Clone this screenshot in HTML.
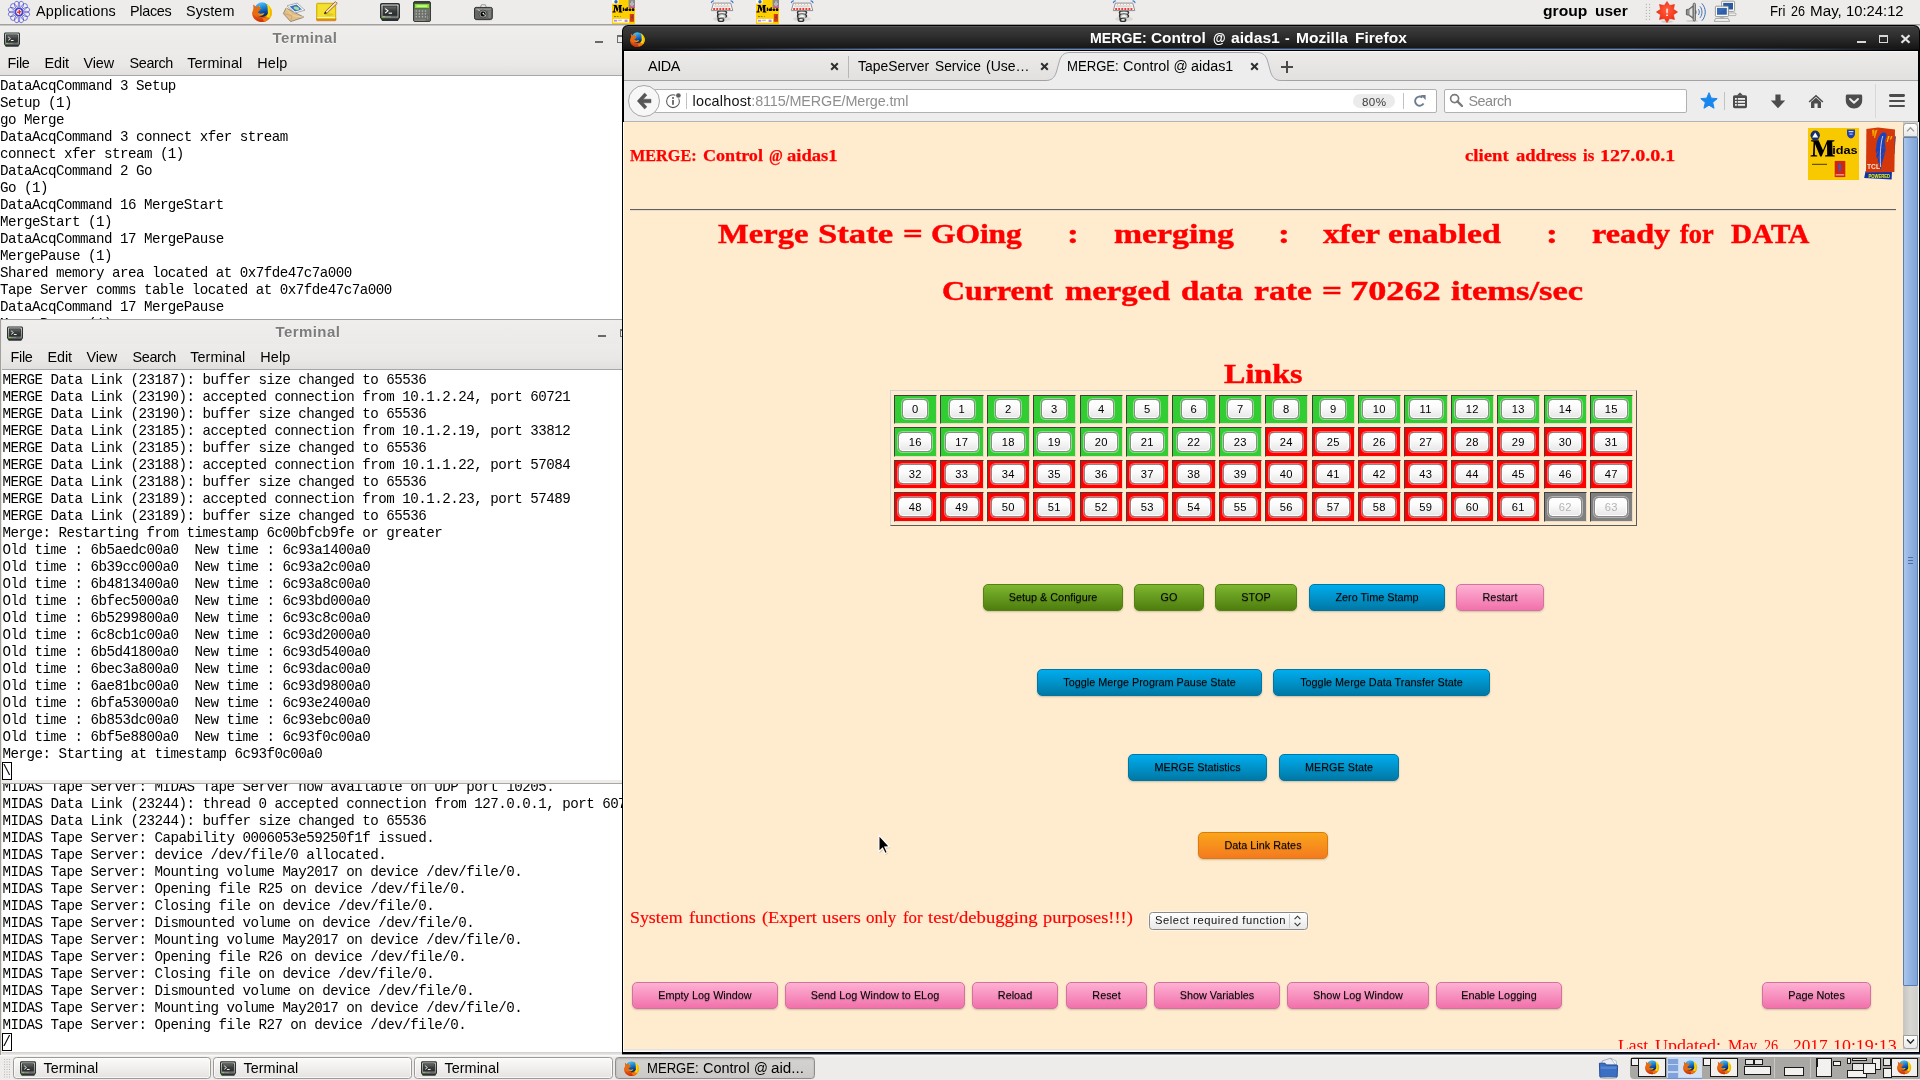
<!DOCTYPE html>
<html><head><meta charset="utf-8"><title>MERGE: Control @ aidas1</title>
<style>
html,body{margin:0;padding:0;background:#edeceb;}
body{width:1920px;height:1080px;overflow:hidden;font-family:"Liberation Sans",sans-serif;}
#desk{will-change:transform;position:relative;width:1920px;height:1080px;overflow:hidden;background:#edeceb;}
.abs{position:absolute;}
svg{position:absolute;overflow:visible;}
pre{margin:0;}
.term{position:absolute;background:#fff;overflow:hidden;}
.term pre{position:absolute;font-family:"Liberation Mono",monospace;font-size:13.33px;line-height:17px;color:#000;letter-spacing:0px;}

</style></head>
<body>
<div id="desk">
<!-- top panel -->
<div style="position:absolute;left:0px;top:0px;width:1920px;height:24px;background:#edeceb;"></div>
<div style="position:absolute;left:0px;top:24px;width:1920px;height:1px;background:#a3a19e;"></div>
<div style="position:absolute;left:0px;top:25px;width:1920px;height:1px;background:#c9c7c4;"></div>
<svg style="left:7.100000000000001px;top:0px" width="24" height="24" viewBox="-12 -12 24 24"><circle cx="0" cy="0" r="10.23" fill="#f4f4ea" opacity="0.75"/><ellipse cx="7.04" cy="0" rx="3.96" ry="2.58" fill="none" stroke="#4a4ad6" stroke-width="0.7" transform="rotate(15)"/><ellipse cx="7.04" cy="0" rx="3.96" ry="2.58" fill="none" stroke="#4a4ad6" stroke-width="0.7" transform="rotate(45)"/><ellipse cx="7.04" cy="0" rx="3.96" ry="2.58" fill="none" stroke="#4a4ad6" stroke-width="0.7" transform="rotate(75)"/><ellipse cx="7.04" cy="0" rx="3.96" ry="2.58" fill="none" stroke="#4a4ad6" stroke-width="0.7" transform="rotate(105)"/><ellipse cx="7.04" cy="0" rx="3.96" ry="2.58" fill="none" stroke="#4a4ad6" stroke-width="0.7" transform="rotate(135)"/><ellipse cx="7.04" cy="0" rx="3.96" ry="2.58" fill="none" stroke="#4a4ad6" stroke-width="0.7" transform="rotate(165)"/><ellipse cx="7.04" cy="0" rx="3.96" ry="2.58" fill="none" stroke="#4a4ad6" stroke-width="0.7" transform="rotate(195)"/><ellipse cx="7.04" cy="0" rx="3.96" ry="2.58" fill="none" stroke="#4a4ad6" stroke-width="0.7" transform="rotate(225)"/><ellipse cx="7.04" cy="0" rx="3.96" ry="2.58" fill="none" stroke="#4a4ad6" stroke-width="0.7" transform="rotate(255)"/><ellipse cx="7.04" cy="0" rx="3.96" ry="2.58" fill="none" stroke="#4a4ad6" stroke-width="0.7" transform="rotate(285)"/><ellipse cx="7.04" cy="0" rx="3.96" ry="2.58" fill="none" stroke="#4a4ad6" stroke-width="0.7" transform="rotate(315)"/><ellipse cx="7.04" cy="0" rx="3.96" ry="2.58" fill="none" stroke="#4a4ad6" stroke-width="0.7" transform="rotate(345)"/><circle cx="0" cy="0" r="3.41" fill="#f0f0f0" stroke="#3535cc" stroke-width="1.05"/><path d="M-2 0.4 L2.4 -0.4 M0.2 -2.2 L0.6 2.4" stroke="#e02828" stroke-width="1.3" fill="none"/></svg>
<span style="position:absolute;left:36.00px;top:1.81px;font-family:'Liberation Sans', sans-serif;font-size:14.4px;line-height:18px;color:#000;white-space:pre;letter-spacing:0.199px;">Applications</span>
<span style="position:absolute;left:130.00px;top:1.81px;font-family:'Liberation Sans', sans-serif;font-size:14.4px;line-height:18px;color:#000;white-space:pre;letter-spacing:-0.284px;">Places</span>
<span style="position:absolute;left:186.00px;top:1.81px;font-family:'Liberation Sans', sans-serif;font-size:14.4px;line-height:18px;color:#000;white-space:pre;letter-spacing:0.086px;">System</span>
<svg style="left:252px;top:2px" width="20" height="20" viewBox="0 0 20 20"><defs><linearGradient id="fg1" x1="0.3" y1="0" x2="0.6" y2="1"><stop offset="0" stop-color="#5cc6f8"/><stop offset="0.35" stop-color="#1f8fdc"/><stop offset="0.7" stop-color="#0b4aa2"/><stop offset="1" stop-color="#071f5e"/></linearGradient><linearGradient id="fb1" x1="0" y1="0" x2="1" y2="0"><stop offset="0" stop-color="#e55f10"/><stop offset="0.6" stop-color="#ee7a10"/><stop offset="0.8" stop-color="#ffd200"/><stop offset="0.93" stop-color="#ffe000"/><stop offset="1" stop-color="#e8a000"/></linearGradient><linearGradient id="fd1" x1="0" y1="0" x2="0" y2="1"><stop offset="0" stop-color="#d02808" stop-opacity="0"/><stop offset="0.55" stop-color="#d02808" stop-opacity="0"/><stop offset="1" stop-color="#c82408" stop-opacity="0.95"/></linearGradient><linearGradient id="fa1" x1="0" y1="0" x2="1" y2="0"><stop offset="0" stop-color="#e86410"/><stop offset="1" stop-color="#ffc400"/></linearGradient></defs><path d="M1.2 2.4 C1.2 4.4 1.8 5.4 2 6.4 C0.6 8.6 0 10.4 0.2 12 C0.8 16.8 5 20 10 20 C15.4 20 19.8 16 20 10.6 C20.1 7.6 18.6 4.8 16.4 3 C14.6 1.6 12.4 1.4 10.4 1.4 C7.4 1.4 5 2.6 3.6 4.4 C2.6 3.4 1.8 2.8 1.2 2.4 Z" fill="url(#fb1)"/><path d="M1.2 2.4 C1.2 4.4 1.8 5.4 2 6.4 C0.6 8.6 0 10.4 0.2 12 C0.8 16.8 5 20 10 20 C15.4 20 19.8 16 20 10.6 C20.1 7.6 18.6 4.8 16.4 3 C14.6 1.6 12.4 1.4 10.4 1.4 C7.4 1.4 5 2.6 3.6 4.4 C2.6 3.4 1.8 2.8 1.2 2.4 Z" fill="url(#fd1)"/><circle cx="10" cy="7.6" r="7.3" fill="url(#fg1)"/><path d="M14.6 1.9 C17.6 3.6 19.9 7 19.8 10.6 C19.7 12.6 19 14.6 17.8 16 L14.2 15.2 C15.6 13.6 16.2 11.6 15.8 9.6 C15.6 7.4 16 5 14.6 1.9 Z" fill="#ffdc00"/><path d="M17.2 4.4 C18.8 6 19.8 8.4 19.8 10.6 C19.7 12.6 19 14.6 17.8 16 L16.8 15.8 C18.2 13.4 18.6 8.6 17.2 4.4 Z" fill="#f0a800" opacity="0.75"/><path d="M14.2 15.2 L17.8 16 C16.4 17.8 14.4 19.2 12 19.7 L10.4 15.9 C12 16.2 13.2 16 14.2 15.2 Z" fill="#ee7a10"/><path d="M1.8 4 C3 5 4.6 5.2 5.8 4.8 C6.6 4.4 7.2 3.6 8 3.4 C7.6 4.2 7.6 4.8 7.8 5.4 L9.6 6.7 L7.8 7.6 C7.8 8.6 7.2 9.2 6.4 9.6 C5.6 9.8 5.6 10.4 6.6 11.6 L5 15 L0.6 12 Z" fill="#ea6a10"/><path d="M6.6 4.4 C7 3.9 7.4 3.6 8 3.4 C7.6 4.2 7.6 4.8 7.8 5.4 Z" fill="#ffb400"/><path d="M5.4 9.8 C6.4 11.4 8 11.9 9.6 11.6 C10.6 11.4 11.4 11 12.4 11.2 C12 12.2 11 13 9.6 13.6 C7.8 14.2 6 13.9 4.8 13 Z" fill="url(#fa1)"/></svg>
<svg style="left:283px;top:2px" width="23" height="21" viewBox="0 0 23 21"><path d="M0.4 11.6 L3 6 L21 15.2 L7.6 19.6 Z" fill="#e2bd84" stroke="#77736c" stroke-width="0.75" stroke-linejoin="round"/><path d="M3 6 L9 13.6 L21 15.2" fill="none" stroke="#f0d8ac" stroke-width="0.8"/><path d="M0.4 11.6 L9 13.6 L7.6 19.6" fill="none" stroke="#c79f64" stroke-width="0.7"/><path d="M4 3.8 L14 1 L22 8.2 L11.8 11 Z" fill="#fbfbfa" stroke="#8c8c8a" stroke-width="0.7" stroke-linejoin="round"/><path d="M6.6 4.5 L13.6 2.6 L19 7.4 L12 9.4 Z" fill="#3a72c2"/><ellipse cx="13.4" cy="6.2" rx="2.9" ry="1.6" fill="#a8dca0" transform="rotate(15 13.4 6.2)"/><circle cx="17.6" cy="7.4" r="0.8" fill="#5ab0f0"/></svg>
<svg style="left:316px;top:1px" width="22" height="21" viewBox="0 0 22 21"><rect x="0.5" y="16.6" width="19.5" height="3.2" rx="1" fill="#e8800e" stroke="#c86a08" stroke-width="0.5"/><rect x="0.7" y="2.3" width="19" height="15.6" rx="0.8" fill="#f1d910" stroke="#c9a400" stroke-width="0.9"/><rect x="1.8" y="3.4" width="16.8" height="12.4" fill="#f6e54a" opacity="0.55"/><rect x="1.2" y="16.2" width="18" height="0.9" fill="#fffbe0"/><path d="M8.4 12.6 L9.6 10.2 L19.4 0.6 L21.2 2.4 L11.2 12 Z" fill="#f2e0bc" stroke="#8a4c0c" stroke-width="0.8" stroke-linejoin="round"/><path d="M8.2 12.9 L9.2 10.6 L10.8 12.2 Z" fill="#1a1208"/><ellipse cx="13" cy="13.6" rx="4.6" ry="1.3" fill="#b8a000" opacity="0.35"/></svg>
<svg style="left:380px;top:3px" width="20" height="18" viewBox="0 0 20 18"><defs><linearGradient id="tb1" x1="0" y1="0" x2="0" y2="1"><stop offset="0" stop-color="#d8dbd4"/><stop offset="1" stop-color="#7f827c"/></linearGradient><linearGradient id="ts1" x1="0" y1="0" x2="0" y2="1"><stop offset="0" stop-color="#6a6d69"/><stop offset="0.5" stop-color="#3a3d3c"/><stop offset="1" stop-color="#2c2f30"/></linearGradient></defs><path d="M2 0 L18 0 C19.2 0 20 0.8 20 2 L20 14.6 L17.8 18 L2.2 18 L0 14.6 L0 2 C0 0.8 0.8 0 2 0 Z" fill="#2b3032"/><rect x="1.4" y="1.4" width="17.2" height="13.8" rx="0.8" fill="url(#tb1)"/><rect x="3.1" y="3.1" width="13.8" height="9.2" fill="url(#ts1)" stroke="#25292a" stroke-width="0.9"/><path d="M5.2 5.6 L8 7.8 L5.2 10" fill="none" stroke="#fff" stroke-width="1.05"/><rect x="8.6" y="9.6" width="3.4" height="1.15" fill="#fff"/><rect x="2.4" y="13.2" width="2.6" height="1.1" fill="#73e020"/><rect x="11" y="13.3" width="6" height="0.9" fill="#5c5f5a"/></svg>
<svg style="left:413px;top:1px" width="18" height="21" viewBox="0 0 18 21"><rect x="0.5" y="0.5" width="17" height="20" rx="1.5" fill="#70726e" stroke="#3a3c3a" stroke-width="1"/><rect x="1" y="1" width="16" height="1.6" fill="#3c3e3c"/><rect x="1.6" y="2.8" width="14.8" height="4.6" fill="#86e032" stroke="#3a4a2a" stroke-width="0.5"/><rect x="3.6" y="4.2" width="10.6" height="1.8" fill="#c8f4a0"/><rect x="2.6" y="9.4" width="1.3" height="1.2" fill="#c2c4be"/><rect x="5.7" y="9.4" width="1.3" height="1.2" fill="#c2c4be"/><rect x="8.8" y="9.4" width="1.3" height="1.2" fill="#c2c4be"/><rect x="11.9" y="9.4" width="1.3" height="1.2" fill="#c2c4be"/><rect x="2.6" y="12.3" width="1.3" height="1.2" fill="#c2c4be"/><rect x="5.7" y="12.3" width="1.3" height="1.2" fill="#c2c4be"/><rect x="8.8" y="12.3" width="1.3" height="1.2" fill="#c2c4be"/><rect x="11.9" y="12.3" width="1.3" height="1.2" fill="#c2c4be"/><rect x="2.6" y="15.2" width="1.3" height="1.2" fill="#c2c4be"/><rect x="5.7" y="15.2" width="1.3" height="1.2" fill="#c2c4be"/><rect x="8.8" y="15.2" width="1.3" height="1.2" fill="#c2c4be"/><rect x="11.9" y="15.2" width="1.3" height="1.2" fill="#c2c4be"/><rect x="13.2" y="14" width="2.6" height="5" fill="#8a8c86" stroke="#4a4c48" stroke-width="0.4"/><rect x="1.6" y="18.6" width="11" height="1.2" fill="#8c8e88"/></svg>
<svg style="left:474px;top:3.6px" width="19" height="17" viewBox="0 0 19 17"><ellipse cx="9.5" cy="16.2" rx="8.6" ry="0.8" fill="#cfcdca"/><path d="M6.4 3.6 L7.4 0.8 L11.4 0.8 L12.4 3.6 Z" fill="#f4f4f2" stroke="#5a5c58" stroke-width="0.6"/><rect x="0.5" y="3.4" width="17.8" height="12" rx="1.6" fill="#666864" stroke="#2f312f" stroke-width="1"/><rect x="1.6" y="4.4" width="15.6" height="1.8" fill="#8c8e8a"/><rect x="14.4" y="6.6" width="2.4" height="7.4" fill="#7e807c"/><circle cx="9" cy="10" r="4" fill="#9a9c98" stroke="#3a3c3a" stroke-width="0.7"/><circle cx="9" cy="10" r="2.5" fill="#0a0a0a"/><path d="M9 9.4 L11.8 12.2" stroke="#e8e8e6" stroke-width="0.9"/><circle cx="9.4" cy="9.6" r="0.8" fill="#f2f2f0"/><path d="M4 5.4 L5.6 7" stroke="#e8e8e6" stroke-width="1"/></svg>
<svg style="left:612px;top:0px" width="23" height="24" viewBox="0 0 23 24"><rect x="0" y="0" width="23" height="24" fill="#ffcf00"/><rect x="0" y="0" width="6.6" height="3.6" fill="#fdfdf8"/><circle cx="4" cy="1.8" r="1.7" fill="#2d66b8"/><rect x="16.6" y="0" width="6.4" height="6.6" fill="#8b8b8b"/><circle cx="20" cy="4" r="1.3" fill="none" stroke="#e4e4e4" stroke-width="0.8"/><rect x="19.6" y="0.8" width="0.9" height="1" fill="#e4e4e4"/><rect x="16.6" y="6.6" width="6.4" height="1.2" fill="#c630c6"/><path d="M0.4 12.4 L0.4 11.6 L1.6 11.2 L2.4 6.2 L1.4 5.6 L1.4 5 L4.4 5 L6.4 9.4 L6.6 5 L10 5 L10 5.8 L9.2 6.2 L9.4 11.4 L10.4 11.8 L10.4 12.4 L6.6 12.4 L6.6 11.8 L7.2 11.4 L7 7.4 L5.6 11.6 L4.8 11.6 L3.2 7 L2.8 11.2 L3.6 11.6 L3.6 12.4 Z" fill="#000"/><rect x="10.8" y="7.6" width="1.3" height="3.4" fill="#000"/><rect x="12.6" y="8.4" width="2.8" height="2.6" rx="0.8" fill="#080800"/><rect x="14.6" y="7.2" width="1.2" height="3.8" fill="#000"/><rect x="16.6" y="8.4" width="2.6" height="2.6" rx="0.8" fill="#080800"/><rect x="19.8" y="8.2" width="2.6" height="2.8" rx="0.8" fill="#080800"/><rect x="2" y="16" width="2.2" height="1" fill="#8a7a10"/><rect x="5" y="16" width="1.6" height="1" fill="#6a9a10"/><rect x="8" y="16" width="0.8" height="1" fill="#8a8a10"/><rect x="1.2" y="18.9" width="15.8" height="3.7" fill="#fff"/><rect x="2" y="19.8" width="3.2" height="1.8" fill="#9a6ae6" opacity="0.8"/><rect x="6.2" y="19.6" width="3.6" height="1.6" fill="#b9a2ee" opacity="0.8"/><rect x="12.6" y="19.6" width="3" height="2.4" fill="#9a6ae6" opacity="0.8"/><rect x="17.8" y="14" width="4.2" height="7.8" fill="#dc3c08"/><path d="M20.4 15 L19.2 18 L20 18 L19.4 20.4 L21 17.2 L20.2 17.2 L21 15 Z" fill="#2040b0"/></svg>
<svg style="left:756px;top:0px" width="23" height="24" viewBox="0 0 23 24"><rect x="0" y="0" width="23" height="24" fill="#ffcf00"/><rect x="0" y="0" width="6.6" height="3.6" fill="#fdfdf8"/><circle cx="4" cy="1.8" r="1.7" fill="#2d66b8"/><rect x="16.6" y="0" width="6.4" height="6.6" fill="#8b8b8b"/><circle cx="20" cy="4" r="1.3" fill="none" stroke="#e4e4e4" stroke-width="0.8"/><rect x="19.6" y="0.8" width="0.9" height="1" fill="#e4e4e4"/><rect x="16.6" y="6.6" width="6.4" height="1.2" fill="#c630c6"/><path d="M0.4 12.4 L0.4 11.6 L1.6 11.2 L2.4 6.2 L1.4 5.6 L1.4 5 L4.4 5 L6.4 9.4 L6.6 5 L10 5 L10 5.8 L9.2 6.2 L9.4 11.4 L10.4 11.8 L10.4 12.4 L6.6 12.4 L6.6 11.8 L7.2 11.4 L7 7.4 L5.6 11.6 L4.8 11.6 L3.2 7 L2.8 11.2 L3.6 11.6 L3.6 12.4 Z" fill="#000"/><rect x="10.8" y="7.6" width="1.3" height="3.4" fill="#000"/><rect x="12.6" y="8.4" width="2.8" height="2.6" rx="0.8" fill="#080800"/><rect x="14.6" y="7.2" width="1.2" height="3.8" fill="#000"/><rect x="16.6" y="8.4" width="2.6" height="2.6" rx="0.8" fill="#080800"/><rect x="19.8" y="8.2" width="2.6" height="2.8" rx="0.8" fill="#080800"/><rect x="2" y="16" width="2.2" height="1" fill="#8a7a10"/><rect x="5" y="16" width="1.6" height="1" fill="#6a9a10"/><rect x="8" y="16" width="0.8" height="1" fill="#8a8a10"/><rect x="1.2" y="18.9" width="15.8" height="3.7" fill="#fff"/><rect x="2" y="19.8" width="3.2" height="1.8" fill="#9a6ae6" opacity="0.8"/><rect x="6.2" y="19.6" width="3.6" height="1.6" fill="#b9a2ee" opacity="0.8"/><rect x="12.6" y="19.6" width="3" height="2.4" fill="#9a6ae6" opacity="0.8"/><rect x="17.8" y="14" width="4.2" height="7.8" fill="#dc3c08"/><path d="M20.4 15 L19.2 18 L20 18 L19.4 20.4 L21 17.2 L20.2 17.2 L21 15 Z" fill="#2040b0"/></svg>
<svg style="left:711px;top:0px" width="23" height="23" viewBox="0 0 23 23"><ellipse cx="11" cy="19" rx="9" ry="2.6" fill="#d6d4d1" opacity="0.8"/><path d="M6.8 11.6 L7.2 19.8" stroke="#2e3030" stroke-width="1.4" fill="none"/><ellipse cx="11" cy="12.5" rx="4.5" ry="1.7" fill="#ededeb" stroke="#2e3030" stroke-width="1.5"/><ellipse cx="11" cy="16" rx="4.5" ry="1.7" fill="#f6f6f4" stroke="#2e3030" stroke-width="1.5"/><ellipse cx="10" cy="19.9" rx="2.7" ry="1.5" fill="#f6f6f4" stroke="#2e3030" stroke-width="1.4"/><path d="M7.4 13.6 C9.4 14.6 12.6 14.6 14.6 13.6" stroke="#fff" stroke-width="0.8" fill="none"/><path d="M7.4 17.1 C9.4 18.1 12.6 18.1 14.6 17.1" stroke="#fff" stroke-width="0.8" fill="none"/><path d="M2.4 3.1 L19.7 3.1 L21.8 10.6 L0.3 10.6 Z" fill="#f7f7f5" stroke="#858583" stroke-width="0.9" stroke-linejoin="round"/><rect x="3.3" y="5.3" width="15.4" height="2.1" fill="#d9d9d5"/><rect x="2.20" y="8" width="1.9" height="2" fill="#ee3a3a"/><rect x="5.25" y="8" width="1.9" height="2" fill="#ee3a3a"/><rect x="8.30" y="8" width="1.9" height="2" fill="#ee3a3a"/><rect x="11.35" y="8" width="1.9" height="2" fill="#ee3a3a"/><rect x="14.40" y="8" width="1.9" height="2" fill="#ee3a3a"/><rect x="17.45" y="8" width="1.9" height="2" fill="#ee3a3a"/><rect x="4.00" y="4.1" width="0.8" height="0.8" fill="#f08a84"/><rect x="7.05" y="4.1" width="0.8" height="0.8" fill="#f08a84"/><rect x="10.10" y="4.1" width="0.8" height="0.8" fill="#f08a84"/><rect x="13.15" y="4.1" width="0.8" height="0.8" fill="#f08a84"/><rect x="16.20" y="4.1" width="0.8" height="0.8" fill="#f08a84"/><path d="M0.4 2.6 C0.6 1.6 1.4 0.9 2.4 0.8" stroke="#3f7ad0" stroke-width="1.2" fill="none" stroke-linecap="round"/><path d="M22 2.6 C21.8 1.6 21 0.9 20 0.8" stroke="#3f7ad0" stroke-width="1.2" fill="none" stroke-linecap="round"/></svg>
<svg style="left:791px;top:0px" width="23" height="23" viewBox="0 0 23 23"><ellipse cx="11" cy="19" rx="9" ry="2.6" fill="#d6d4d1" opacity="0.8"/><path d="M6.8 11.6 L7.2 19.8" stroke="#2e3030" stroke-width="1.4" fill="none"/><ellipse cx="11" cy="12.5" rx="4.5" ry="1.7" fill="#ededeb" stroke="#2e3030" stroke-width="1.5"/><ellipse cx="11" cy="16" rx="4.5" ry="1.7" fill="#f6f6f4" stroke="#2e3030" stroke-width="1.5"/><ellipse cx="10" cy="19.9" rx="2.7" ry="1.5" fill="#f6f6f4" stroke="#2e3030" stroke-width="1.4"/><path d="M7.4 13.6 C9.4 14.6 12.6 14.6 14.6 13.6" stroke="#fff" stroke-width="0.8" fill="none"/><path d="M7.4 17.1 C9.4 18.1 12.6 18.1 14.6 17.1" stroke="#fff" stroke-width="0.8" fill="none"/><path d="M2.4 3.1 L19.7 3.1 L21.8 10.6 L0.3 10.6 Z" fill="#f7f7f5" stroke="#858583" stroke-width="0.9" stroke-linejoin="round"/><rect x="3.3" y="5.3" width="15.4" height="2.1" fill="#d9d9d5"/><rect x="2.20" y="8" width="1.9" height="2" fill="#ee3a3a"/><rect x="5.25" y="8" width="1.9" height="2" fill="#ee3a3a"/><rect x="8.30" y="8" width="1.9" height="2" fill="#ee3a3a"/><rect x="11.35" y="8" width="1.9" height="2" fill="#ee3a3a"/><rect x="14.40" y="8" width="1.9" height="2" fill="#ee3a3a"/><rect x="17.45" y="8" width="1.9" height="2" fill="#ee3a3a"/><rect x="4.00" y="4.1" width="0.8" height="0.8" fill="#f08a84"/><rect x="7.05" y="4.1" width="0.8" height="0.8" fill="#f08a84"/><rect x="10.10" y="4.1" width="0.8" height="0.8" fill="#f08a84"/><rect x="13.15" y="4.1" width="0.8" height="0.8" fill="#f08a84"/><rect x="16.20" y="4.1" width="0.8" height="0.8" fill="#f08a84"/><path d="M0.4 2.6 C0.6 1.6 1.4 0.9 2.4 0.8" stroke="#3f7ad0" stroke-width="1.2" fill="none" stroke-linecap="round"/><path d="M22 2.6 C21.8 1.6 21 0.9 20 0.8" stroke="#3f7ad0" stroke-width="1.2" fill="none" stroke-linecap="round"/></svg>
<svg style="left:1113px;top:0px" width="23" height="23" viewBox="0 0 23 23"><ellipse cx="11" cy="19" rx="9" ry="2.6" fill="#d6d4d1" opacity="0.8"/><path d="M6.8 11.6 L7.2 19.8" stroke="#2e3030" stroke-width="1.4" fill="none"/><ellipse cx="11" cy="12.5" rx="4.5" ry="1.7" fill="#ededeb" stroke="#2e3030" stroke-width="1.5"/><ellipse cx="11" cy="16" rx="4.5" ry="1.7" fill="#f6f6f4" stroke="#2e3030" stroke-width="1.5"/><ellipse cx="10" cy="19.9" rx="2.7" ry="1.5" fill="#f6f6f4" stroke="#2e3030" stroke-width="1.4"/><path d="M7.4 13.6 C9.4 14.6 12.6 14.6 14.6 13.6" stroke="#fff" stroke-width="0.8" fill="none"/><path d="M7.4 17.1 C9.4 18.1 12.6 18.1 14.6 17.1" stroke="#fff" stroke-width="0.8" fill="none"/><path d="M2.4 3.1 L19.7 3.1 L21.8 10.6 L0.3 10.6 Z" fill="#f7f7f5" stroke="#858583" stroke-width="0.9" stroke-linejoin="round"/><rect x="3.3" y="5.3" width="15.4" height="2.1" fill="#d9d9d5"/><rect x="2.20" y="8" width="1.9" height="2" fill="#ee3a3a"/><rect x="5.25" y="8" width="1.9" height="2" fill="#ee3a3a"/><rect x="8.30" y="8" width="1.9" height="2" fill="#ee3a3a"/><rect x="11.35" y="8" width="1.9" height="2" fill="#ee3a3a"/><rect x="14.40" y="8" width="1.9" height="2" fill="#ee3a3a"/><rect x="17.45" y="8" width="1.9" height="2" fill="#ee3a3a"/><rect x="4.00" y="4.1" width="0.8" height="0.8" fill="#f08a84"/><rect x="7.05" y="4.1" width="0.8" height="0.8" fill="#f08a84"/><rect x="10.10" y="4.1" width="0.8" height="0.8" fill="#f08a84"/><rect x="13.15" y="4.1" width="0.8" height="0.8" fill="#f08a84"/><rect x="16.20" y="4.1" width="0.8" height="0.8" fill="#f08a84"/><path d="M0.4 2.6 C0.6 1.6 1.4 0.9 2.4 0.8" stroke="#3f7ad0" stroke-width="1.2" fill="none" stroke-linecap="round"/><path d="M22 2.6 C21.8 1.6 21 0.9 20 0.8" stroke="#3f7ad0" stroke-width="1.2" fill="none" stroke-linecap="round"/></svg>
<span style="position:absolute;left:1543.30px;top:1.54px;font-family:'Liberation Sans', sans-serif;font-size:14.6px;line-height:18px;color:#000;white-space:pre;transform:scaleX(1.0719);transform-origin:0 50%;font-weight:bold;">group</span><span style="position:absolute;left:1594.60px;top:1.54px;font-family:'Liberation Sans', sans-serif;font-size:14.6px;line-height:18px;color:#000;white-space:pre;transform:scaleX(1.0627);transform-origin:0 50%;font-weight:bold;">user</span>
<svg style="left:1645px;top:3px" width="8" height="20" viewBox="0 0 8 20"><rect x="0.8" y="0.8" width="1.1" height="1.1" fill="#b3b1ae"/><rect x="4.0" y="0.8" width="1.1" height="1.1" fill="#b3b1ae"/><rect x="0.8" y="3.8" width="1.1" height="1.1" fill="#b3b1ae"/><rect x="4.0" y="3.8" width="1.1" height="1.1" fill="#b3b1ae"/><rect x="0.8" y="6.8" width="1.1" height="1.1" fill="#b3b1ae"/><rect x="4.0" y="6.8" width="1.1" height="1.1" fill="#b3b1ae"/><rect x="0.8" y="9.8" width="1.1" height="1.1" fill="#b3b1ae"/><rect x="4.0" y="9.8" width="1.1" height="1.1" fill="#b3b1ae"/><rect x="0.8" y="12.8" width="1.1" height="1.1" fill="#b3b1ae"/><rect x="4.0" y="12.8" width="1.1" height="1.1" fill="#b3b1ae"/><rect x="0.8" y="15.8" width="1.1" height="1.1" fill="#b3b1ae"/><rect x="4.0" y="15.8" width="1.1" height="1.1" fill="#b3b1ae"/></svg>
<svg style="left:1655.5px;top:0.6px" width="22" height="23" viewBox="0 0 22 23"><defs><radialGradient id="al" cx="0.5" cy="0.4" r="0.6"><stop offset="0" stop-color="#ff6040"/><stop offset="1" stop-color="#ef2a0c"/></radialGradient></defs><ellipse cx="11" cy="20.6" rx="6" ry="1.2" fill="#cfcdca"/><polygon points="11.00,0.40 13.68,4.53 18.50,3.50 17.47,8.32 21.60,11.00 17.47,13.68 18.50,18.50 13.68,17.47 11.00,21.60 8.32,17.47 3.50,18.50 4.53,13.68 0.40,11.00 4.53,8.32 3.50,3.50 8.32,4.53" fill="url(#al)" stroke="#e01c04" stroke-width="0.5" stroke-linejoin="round"/><rect x="10.3" y="7.4" width="1.5" height="5" rx="0.7" fill="#fff" opacity="0.92"/><rect x="10.1" y="13.6" width="1.9" height="1.4" rx="0.6" fill="#fff" opacity="0.92"/></svg>
<svg style="left:1685px;top:1px" width="24" height="22" viewBox="0 0 24 22"><ellipse cx="7" cy="20" rx="6" ry="1" fill="#cfcdca"/><path d="M1.4 8.6 L3.6 8.2 L8.4 4.6 L8.4 17.6 L3.6 14.2 L1.4 13.8 Z" fill="#8d8f8b" stroke="#4c4e4a" stroke-width="0.8" stroke-linejoin="round"/><path d="M4.6 8.8 L7.6 6.4 L7.6 15.8 L4.6 13.6 Z" fill="#e4e5e2"/><rect x="8.2" y="2.2" width="2.2" height="17.8" rx="1" fill="#babcb8" stroke="#4c4e4a" stroke-width="0.8"/><path d="M10.6 9 L11.4 9.8 L11.4 12.6 L10.6 13.4 Z" fill="#4c4e4a"/><path d="M13.4 8.2 C14.6 9.8 14.6 12.4 13.4 14" fill="none" stroke="#3f6fb5" stroke-width="1"/><path d="M15 5.4 C17.6 8.4 17.6 13.8 15 16.8" fill="none" stroke="#3f6fb5" stroke-width="1"/><path d="M16.8 2.4 C21.4 7 21.4 15.2 16.8 19.8" fill="none" stroke="#3f6fb5" stroke-width="1"/></svg>
<svg style="left:1713px;top:0px" width="24" height="23" viewBox="0 0 24 23"><rect x="8.6" y="1.2" width="13" height="10.2" rx="0.9" fill="#fbfbfa" stroke="#828480" stroke-width="0.8"/><rect x="10.2" y="2.9" width="9.8" height="6.6" fill="#2c5aa0"/><rect x="15.6" y="13" width="7.4" height="2.6" rx="1" fill="#eeeeec" stroke="#8a8c88" stroke-width="0.6"/><rect x="2.4" y="6.2" width="13" height="10.4" rx="0.9" fill="#fbfbfa" stroke="#828480" stroke-width="0.8"/><rect x="4" y="7.9" width="9.8" height="6.8" fill="#2f5fa8"/><path d="M4 14.7 L4 7.9 L13.8 7.9 Z" fill="#3f72bd" opacity="0.6"/><rect x="6.6" y="16.8" width="4.6" height="1.4" fill="#b9bbb6"/><path d="M2.6 18.4 L15.2 18.4 L16.6 21.4 L1.2 21.4 Z" fill="#f3f3f1" stroke="#8a8c88" stroke-width="0.7" stroke-linejoin="round"/></svg>
<span style="position:absolute;left:1769.65px;top:1.85px;font-family:'Liberation Sans', sans-serif;font-size:14px;line-height:18px;color:#000;white-space:pre;transform:scaleX(0.9465);transform-origin:0 50%;">Fri</span><span style="position:absolute;left:1790.80px;top:1.85px;font-family:'Liberation Sans', sans-serif;font-size:14px;line-height:18px;color:#000;white-space:pre;transform:scaleX(0.8995);transform-origin:0 50%;">26</span><span style="position:absolute;left:1809.91px;top:1.85px;font-family:'Liberation Sans', sans-serif;font-size:14px;line-height:18px;color:#000;white-space:pre;transform:scaleX(1.0872);transform-origin:0 50%;">May,</span><span style="position:absolute;left:1845.94px;top:1.85px;font-family:'Liberation Sans', sans-serif;font-size:14px;line-height:18px;color:#000;white-space:pre;transform:scaleX(1.0566);transform-origin:0 50%;">10:24:12</span>
<!-- terminal windows -->
<div style="position:absolute;left:0px;top:26px;width:622px;height:24px;background:linear-gradient(#efeeed,#ebeae9);"></div><div style="position:absolute;left:0px;top:50px;width:622px;height:25px;background:linear-gradient(#edeceb 0%,#e9e8e7 60%,#e1e0df 100%);"></div><div style="position:absolute;left:0px;top:75px;width:622px;height:1px;background:#a9a7a5;"></div><svg style="left:4px;top:32px" width="16" height="15.2" viewBox="0 0 20 18"><defs><linearGradient id="tb2" x1="0" y1="0" x2="0" y2="1"><stop offset="0" stop-color="#d8dbd4"/><stop offset="1" stop-color="#7f827c"/></linearGradient><linearGradient id="ts2" x1="0" y1="0" x2="0" y2="1"><stop offset="0" stop-color="#6a6d69"/><stop offset="0.5" stop-color="#3a3d3c"/><stop offset="1" stop-color="#2c2f30"/></linearGradient></defs><path d="M2 0 L18 0 C19.2 0 20 0.8 20 2 L20 14.6 L17.8 18 L2.2 18 L0 14.6 L0 2 C0 0.8 0.8 0 2 0 Z" fill="#2b3032"/><rect x="1.4" y="1.4" width="17.2" height="13.8" rx="0.8" fill="url(#tb2)"/><rect x="3.1" y="3.1" width="13.8" height="9.2" fill="url(#ts2)" stroke="#25292a" stroke-width="0.9"/><path d="M5.2 5.6 L8 7.8 L5.2 10" fill="none" stroke="#fff" stroke-width="1.05"/><rect x="8.6" y="9.6" width="3.4" height="1.15" fill="#fff"/><rect x="2.4" y="13.2" width="2.6" height="1.1" fill="#73e020"/><rect x="11" y="13.3" width="6" height="0.9" fill="#5c5f5a"/></svg><span style="position:absolute;left:272.40px;top:27.90px;font-family:'Liberation Sans', sans-serif;font-size:15px;line-height:19px;color:#7c7c7c;white-space:pre;font-weight:bold;letter-spacing:0.449px;text-shadow:0 1px 0 #fbfbfb;">Terminal</span><div style="position:absolute;left:595px;top:41px;width:8px;height:2px;background:#686868;"></div><div style="position:absolute;left:617px;top:35px;width:9px;height:8px;box-sizing:border-box;border:1px solid #6e6e6e;border-top-width:2px;"></div><span style="position:absolute;left:7.50px;top:53.91px;font-family:'Liberation Sans', sans-serif;font-size:14.4px;line-height:18px;color:#000;white-space:pre;letter-spacing:-0.276px;">File</span><span style="position:absolute;left:44.60px;top:53.91px;font-family:'Liberation Sans', sans-serif;font-size:14.4px;line-height:18px;color:#000;white-space:pre;letter-spacing:-0.153px;">Edit</span><span style="position:absolute;left:83.40px;top:53.91px;font-family:'Liberation Sans', sans-serif;font-size:14.4px;line-height:18px;color:#000;white-space:pre;letter-spacing:-0.084px;">View</span><span style="position:absolute;left:129.60px;top:53.91px;font-family:'Liberation Sans', sans-serif;font-size:14.4px;line-height:18px;color:#000;white-space:pre;letter-spacing:-0.402px;">Search</span><span style="position:absolute;left:187.20px;top:53.91px;font-family:'Liberation Sans', sans-serif;font-size:14.4px;line-height:18px;color:#000;white-space:pre;letter-spacing:0.101px;">Terminal</span><span style="position:absolute;left:257.30px;top:53.91px;font-family:'Liberation Sans', sans-serif;font-size:14.4px;line-height:18px;color:#000;white-space:pre;letter-spacing:0.098px;">Help</span>
<div class="term" style="left:0;top:76px;width:622px;height:243px;"><pre style="left:0px;top:1.72px;font-size:14.2px;letter-spacing:-0.520px;">DataAcqCommand 3 Setup
Setup (1)
go Merge
DataAcqCommand 3 connect xfer stream
connect xfer stream (1)
DataAcqCommand 2 Go
Go (1)
DataAcqCommand 16 MergeStart
MergeStart (1)
DataAcqCommand 17 MergePause
MergePause (1)
Shared memory area located at 0x7fde47c7a000
Tape Server comms table located at 0x7fde47c7a000
DataAcqCommand 17 MergePause
MergePause (1)</pre></div>
<div style="position:absolute;left:0px;top:319px;width:622px;height:1px;background:#a3a19e;"></div>
<div style="position:absolute;left:0px;top:320px;width:622px;height:24px;background:linear-gradient(#efeeed,#ebeae9);"></div><div style="position:absolute;left:0px;top:344px;width:622px;height:25px;background:linear-gradient(#edeceb 0%,#e9e8e7 60%,#e1e0df 100%);"></div><div style="position:absolute;left:0px;top:369px;width:622px;height:1px;background:#a9a7a5;"></div><svg style="left:7px;top:326px" width="16" height="15.2" viewBox="0 0 20 18"><defs><linearGradient id="tb3" x1="0" y1="0" x2="0" y2="1"><stop offset="0" stop-color="#d8dbd4"/><stop offset="1" stop-color="#7f827c"/></linearGradient><linearGradient id="ts3" x1="0" y1="0" x2="0" y2="1"><stop offset="0" stop-color="#6a6d69"/><stop offset="0.5" stop-color="#3a3d3c"/><stop offset="1" stop-color="#2c2f30"/></linearGradient></defs><path d="M2 0 L18 0 C19.2 0 20 0.8 20 2 L20 14.6 L17.8 18 L2.2 18 L0 14.6 L0 2 C0 0.8 0.8 0 2 0 Z" fill="#2b3032"/><rect x="1.4" y="1.4" width="17.2" height="13.8" rx="0.8" fill="url(#tb3)"/><rect x="3.1" y="3.1" width="13.8" height="9.2" fill="url(#ts3)" stroke="#25292a" stroke-width="0.9"/><path d="M5.2 5.6 L8 7.8 L5.2 10" fill="none" stroke="#fff" stroke-width="1.05"/><rect x="8.6" y="9.6" width="3.4" height="1.15" fill="#fff"/><rect x="2.4" y="13.2" width="2.6" height="1.1" fill="#73e020"/><rect x="11" y="13.3" width="6" height="0.9" fill="#5c5f5a"/></svg><span style="position:absolute;left:275.40px;top:321.90px;font-family:'Liberation Sans', sans-serif;font-size:15px;line-height:19px;color:#7c7c7c;white-space:pre;font-weight:bold;letter-spacing:0.449px;text-shadow:0 1px 0 #fbfbfb;">Terminal</span><div style="position:absolute;left:598px;top:335px;width:8px;height:2px;background:#686868;"></div><div style="position:absolute;left:620px;top:329px;width:9px;height:8px;box-sizing:border-box;border:1px solid #6e6e6e;border-top-width:2px;"></div><span style="position:absolute;left:10.50px;top:347.91px;font-family:'Liberation Sans', sans-serif;font-size:14.4px;line-height:18px;color:#000;white-space:pre;letter-spacing:-0.276px;">File</span><span style="position:absolute;left:47.60px;top:347.91px;font-family:'Liberation Sans', sans-serif;font-size:14.4px;line-height:18px;color:#000;white-space:pre;letter-spacing:-0.153px;">Edit</span><span style="position:absolute;left:86.40px;top:347.91px;font-family:'Liberation Sans', sans-serif;font-size:14.4px;line-height:18px;color:#000;white-space:pre;letter-spacing:-0.084px;">View</span><span style="position:absolute;left:132.60px;top:347.91px;font-family:'Liberation Sans', sans-serif;font-size:14.4px;line-height:18px;color:#000;white-space:pre;letter-spacing:-0.402px;">Search</span><span style="position:absolute;left:190.20px;top:347.91px;font-family:'Liberation Sans', sans-serif;font-size:14.4px;line-height:18px;color:#000;white-space:pre;letter-spacing:0.101px;">Terminal</span><span style="position:absolute;left:260.30px;top:347.91px;font-family:'Liberation Sans', sans-serif;font-size:14.4px;line-height:18px;color:#000;white-space:pre;letter-spacing:0.098px;">Help</span>
<div style="position:absolute;left:0px;top:319px;width:1px;height:736px;background:#a3a19e;"></div>
<div style="position:absolute;left:1px;top:320px;width:1px;height:735px;background:#e9e8e6;"></div>
<div class="term" style="left:2px;top:370px;width:620px;height:410px;"><pre style="left:0.6px;top:1.72px;font-size:14.2px;letter-spacing:-0.520px;">MERGE Data Link (23187): buffer size changed to 65536
MERGE Data Link (23190): accepted connection from 10.1.2.24, port 60721
MERGE Data Link (23190): buffer size changed to 65536
MERGE Data Link (23185): accepted connection from 10.1.2.19, port 33812
MERGE Data Link (23185): buffer size changed to 65536
MERGE Data Link (23188): accepted connection from 10.1.1.22, port 57084
MERGE Data Link (23188): buffer size changed to 65536
MERGE Data Link (23189): accepted connection from 10.1.2.23, port 57489
MERGE Data Link (23189): buffer size changed to 65536
Merge: Restarting from timestamp 6c00bfcb9fe or greater
Old time : 6b5aedc00a0  New time : 6c93a1400a0
Old time : 6b39cc000a0  New time : 6c93a2c00a0
Old time : 6b4813400a0  New time : 6c93a8c00a0
Old time : 6bfec5000a0  New time : 6c93bd000a0
Old time : 6b5299800a0  New time : 6c93c8c00a0
Old time : 6c8cb1c00a0  New time : 6c93d2000a0
Old time : 6b5d41800a0  New time : 6c93d5400a0
Old time : 6bec3a800a0  New time : 6c93dac00a0
Old time : 6ae81bc00a0  New time : 6c93d9800a0
Old time : 6bfa53000a0  New time : 6c93e2400a0
Old time : 6b853dc00a0  New time : 6c93ebc00a0
Old time : 6bf5e8800a0  New time : 6c93f0c00a0
Merge: Starting at timestamp 6c93f0c00a0
\</pre></div>
<div style="position:absolute;left:2px;top:762px;width:10px;height:18px;box-sizing:border-box;border:1px solid #000;"></div>
<div style="position:absolute;left:2px;top:780px;width:620px;height:3px;background:#edeceb;"></div>
<div style="position:absolute;left:2px;top:783px;width:620px;height:1px;background:#a9a7a4;"></div>
<div class="term" style="left:2px;top:784px;width:620px;height:268px;"><pre style="left:0.6px;top:-5.28px;font-size:14.2px;letter-spacing:-0.520px;">MIDAS Tape Server: MIDAS Tape Server now available on UDP port 10205.
MIDAS Data Link (23244): thread 0 accepted connection from 127.0.0.1, port 60718
MIDAS Data Link (23244): buffer size changed to 65536
MIDAS Tape Server: Capability 0006053e59250f1f issued.
MIDAS Tape Server: device /dev/file/0 allocated.
MIDAS Tape Server: Mounting volume May2017 on device /dev/file/0.
MIDAS Tape Server: Opening file R25 on device /dev/file/0.
MIDAS Tape Server: Closing file on device /dev/file/0.
MIDAS Tape Server: Dismounted volume on device /dev/file/0.
MIDAS Tape Server: Mounting volume May2017 on device /dev/file/0.
MIDAS Tape Server: Opening file R26 on device /dev/file/0.
MIDAS Tape Server: Closing file on device /dev/file/0.
MIDAS Tape Server: Dismounted volume on device /dev/file/0.
MIDAS Tape Server: Mounting volume May2017 on device /dev/file/0.
MIDAS Tape Server: Opening file R27 on device /dev/file/0.
/</pre></div>
<div style="position:absolute;left:2px;top:1033px;width:10px;height:18px;box-sizing:border-box;border:1px solid #000;"></div>
<div style="position:absolute;left:2px;top:1052px;width:620px;height:3px;background:linear-gradient(#cfcecb,#edeceb);"></div>
<!-- firefox window -->
<div style="position:absolute;left:622px;top:25px;width:1298px;height:1029px;background:#000;border-radius:6px 6px 0 0;"></div>
<div style="position:absolute;left:623px;top:26px;width:1296px;height:24px;border-radius:5px 5px 0 0;background:linear-gradient(#3d3d3d 0%,#313131 35%,#1f1f1f 75%,#121212 100%);"></div>
<div style="position:absolute;left:624px;top:48px;width:1294px;height:1px;background:linear-gradient(90deg,#151515 0%,#36445c 22%,#36445c 78%,#151515 100%);"></div>
<div style="position:absolute;left:624px;top:49px;width:1294px;height:1px;background:linear-gradient(90deg,#0c0c0c 0%,#6788b7 22%,#6788b7 78%,#0c0c0c 100%);"></div>
<div style="position:absolute;left:624px;top:50px;width:1294px;height:1px;background:#000;"></div>
<svg style="left:629.8px;top:31.6px" width="14.8" height="14.8" viewBox="0 0 20 20"><defs><linearGradient id="fg2" x1="0.3" y1="0" x2="0.6" y2="1"><stop offset="0" stop-color="#5cc6f8"/><stop offset="0.35" stop-color="#1f8fdc"/><stop offset="0.7" stop-color="#0b4aa2"/><stop offset="1" stop-color="#071f5e"/></linearGradient><linearGradient id="fb2" x1="0" y1="0" x2="1" y2="0"><stop offset="0" stop-color="#e55f10"/><stop offset="0.6" stop-color="#ee7a10"/><stop offset="0.8" stop-color="#ffd200"/><stop offset="0.93" stop-color="#ffe000"/><stop offset="1" stop-color="#e8a000"/></linearGradient><linearGradient id="fd2" x1="0" y1="0" x2="0" y2="1"><stop offset="0" stop-color="#d02808" stop-opacity="0"/><stop offset="0.55" stop-color="#d02808" stop-opacity="0"/><stop offset="1" stop-color="#c82408" stop-opacity="0.95"/></linearGradient><linearGradient id="fa2" x1="0" y1="0" x2="1" y2="0"><stop offset="0" stop-color="#e86410"/><stop offset="1" stop-color="#ffc400"/></linearGradient></defs><path d="M1.2 2.4 C1.2 4.4 1.8 5.4 2 6.4 C0.6 8.6 0 10.4 0.2 12 C0.8 16.8 5 20 10 20 C15.4 20 19.8 16 20 10.6 C20.1 7.6 18.6 4.8 16.4 3 C14.6 1.6 12.4 1.4 10.4 1.4 C7.4 1.4 5 2.6 3.6 4.4 C2.6 3.4 1.8 2.8 1.2 2.4 Z" fill="url(#fb2)"/><path d="M1.2 2.4 C1.2 4.4 1.8 5.4 2 6.4 C0.6 8.6 0 10.4 0.2 12 C0.8 16.8 5 20 10 20 C15.4 20 19.8 16 20 10.6 C20.1 7.6 18.6 4.8 16.4 3 C14.6 1.6 12.4 1.4 10.4 1.4 C7.4 1.4 5 2.6 3.6 4.4 C2.6 3.4 1.8 2.8 1.2 2.4 Z" fill="url(#fd2)"/><circle cx="10" cy="7.6" r="7.3" fill="url(#fg2)"/><path d="M14.6 1.9 C17.6 3.6 19.9 7 19.8 10.6 C19.7 12.6 19 14.6 17.8 16 L14.2 15.2 C15.6 13.6 16.2 11.6 15.8 9.6 C15.6 7.4 16 5 14.6 1.9 Z" fill="#ffdc00"/><path d="M17.2 4.4 C18.8 6 19.8 8.4 19.8 10.6 C19.7 12.6 19 14.6 17.8 16 L16.8 15.8 C18.2 13.4 18.6 8.6 17.2 4.4 Z" fill="#f0a800" opacity="0.75"/><path d="M14.2 15.2 L17.8 16 C16.4 17.8 14.4 19.2 12 19.7 L10.4 15.9 C12 16.2 13.2 16 14.2 15.2 Z" fill="#ee7a10"/><path d="M1.8 4 C3 5 4.6 5.2 5.8 4.8 C6.6 4.4 7.2 3.6 8 3.4 C7.6 4.2 7.6 4.8 7.8 5.4 L9.6 6.7 L7.8 7.6 C7.8 8.6 7.2 9.2 6.4 9.6 C5.6 9.8 5.6 10.4 6.6 11.6 L5 15 L0.6 12 Z" fill="#ea6a10"/><path d="M6.6 4.4 C7 3.9 7.4 3.6 8 3.4 C7.6 4.2 7.6 4.8 7.8 5.4 Z" fill="#ffb400"/><path d="M5.4 9.8 C6.4 11.4 8 11.9 9.6 11.6 C10.6 11.4 11.4 11 12.4 11.2 C12 12.2 11 13 9.6 13.6 C7.8 14.2 6 13.9 4.8 13 Z" fill="url(#fa2)"/></svg>
<div style="position:absolute;left:628px;top:26px;width:1286px;height:1px;background:#555555;"></div>
<span style="position:absolute;left:1089.70px;top:28.74px;font-family:'Liberation Sans', sans-serif;font-size:14.6px;line-height:18px;color:#fff;white-space:pre;transform:scaleX(0.9702);transform-origin:0 50%;font-weight:bold;">MERGE:</span><span style="position:absolute;left:1151.40px;top:28.74px;font-family:'Liberation Sans', sans-serif;font-size:14.6px;line-height:18px;color:#fff;white-space:pre;transform:scaleX(1.0555);transform-origin:0 50%;font-weight:bold;">Control</span><span style="position:absolute;left:1212.50px;top:28.74px;font-family:'Liberation Sans', sans-serif;font-size:14.6px;line-height:18px;color:#fff;white-space:pre;transform:scaleX(0.8857);transform-origin:0 50%;font-weight:bold;">@</span><span style="position:absolute;left:1230.50px;top:28.74px;font-family:'Liberation Sans', sans-serif;font-size:14.6px;line-height:18px;color:#fff;white-space:pre;transform:scaleX(1.0746);transform-origin:0 50%;font-weight:bold;">aidas1</span><span style="position:absolute;left:1285.40px;top:28.74px;font-family:'Liberation Sans', sans-serif;font-size:14.6px;line-height:18px;color:#fff;white-space:pre;transform:scaleX(0.9600);transform-origin:0 50%;font-weight:bold;">-</span><span style="position:absolute;left:1296.40px;top:28.74px;font-family:'Liberation Sans', sans-serif;font-size:14.6px;line-height:18px;color:#fff;white-space:pre;transform:scaleX(1.0660);transform-origin:0 50%;font-weight:bold;">Mozilla</span><span style="position:absolute;left:1355.40px;top:28.74px;font-family:'Liberation Sans', sans-serif;font-size:14.6px;line-height:18px;color:#fff;white-space:pre;transform:scaleX(1.0638);transform-origin:0 50%;font-weight:bold;">Firefox</span>
<div style="position:absolute;left:1857px;top:41px;width:9px;height:2px;background:#d8d8d8;"></div>
<div style="position:absolute;left:1879px;top:35px;width:9px;height:8px;box-sizing:border-box;border:1px solid #d8d8d8;border-top-width:2px;"></div>
<svg style="left:1900px;top:34px" width="11" height="10" viewBox="0 0 11 10"><path d="M1.5 1.2 L9.5 8.8 M9.5 1.2 L1.5 8.8" stroke="#e4e4e4" stroke-width="2.2" fill="none"/></svg>
<div style="position:absolute;left:624px;top:51px;width:1294px;height:29px;background:linear-gradient(#fbfbfb 0px,#ecebea 1.5px,#e9e8e7 8px,#e2e1e0 100%);"></div>
<div style="position:absolute;left:624px;top:80px;width:1294px;height:1px;background:#a4a2a0;"></div>
<div style="position:absolute;left:624px;top:81px;width:1294px;height:40px;background:#ededed;"></div>
<div style="position:absolute;left:624px;top:121px;width:1294px;height:1px;background:#b5b3b1;"></div>
<svg style="left:1046px;top:51px" width="240" height="31" viewBox="0 0 240 31"><path d="M0 29.5 C5 29.5 8.5 27 10.4 21 L13.4 10 C15 4.5 18 1.5 24 1.5 L211 1.5 C217 1.5 220 4.5 221.6 10 L224.6 21 C226.5 27 230 29.5 235 29.5 L240 29.5 L240 31 L0 31 Z" fill="#ededed"/><path d="M0 29.5 C5 29.5 8.5 27 10.4 21 L13.4 10 C15 4.5 18 1.5 24 1.5 L211 1.5 C217 1.5 220 4.5 221.6 10 L224.6 21 C226.5 27 230 29.5 235 29.5 L240 29.5" fill="none" stroke="#a3a8b0" stroke-width="1"/></svg>
<span style="position:absolute;left:648.00px;top:57.01px;font-family:'Liberation Sans', sans-serif;font-size:14.4px;line-height:18px;color:#000;white-space:pre;letter-spacing:-0.398px;">AIDA</span>
<svg style="left:829.5px;top:62.3px" width="9" height="9" viewBox="0 0 9 9"><path d="M1.2 1.2 L7.8 7.8 M7.8 1.2 L1.2 7.8" stroke="#2e2e2e" stroke-width="2" fill="none"/></svg>
<div style="position:absolute;left:848px;top:56px;width:1px;height:22px;background:#b9b7b5;"></div>
<span style="position:absolute;left:858.00px;top:57.15px;font-family:'Liberation Sans', sans-serif;font-size:14px;line-height:18px;color:#000;white-space:pre;transform:scaleX(0.9940);transform-origin:0 50%;">TapeServer</span><span style="position:absolute;left:934.50px;top:57.15px;font-family:'Liberation Sans', sans-serif;font-size:14px;line-height:18px;color:#000;white-space:pre;transform:scaleX(0.9809);transform-origin:0 50%;">Service</span><span style="position:absolute;left:986.25px;top:57.15px;font-family:'Liberation Sans', sans-serif;font-size:14px;line-height:18px;color:#000;white-space:pre;transform:scaleX(0.9986);transform-origin:0 50%;">(Use…</span>
<svg style="left:1039.5px;top:62.3px" width="9" height="9" viewBox="0 0 9 9"><path d="M1.2 1.2 L7.8 7.8 M7.8 1.2 L1.2 7.8" stroke="#2e2e2e" stroke-width="2" fill="none"/></svg>
<span style="position:absolute;left:1067.06px;top:57.15px;font-family:'Liberation Sans', sans-serif;font-size:14px;line-height:18px;color:#000;white-space:pre;transform:scaleX(0.9374);transform-origin:0 50%;">MERGE:</span><span style="position:absolute;left:1123.25px;top:57.15px;font-family:'Liberation Sans', sans-serif;font-size:14px;line-height:18px;color:#000;white-space:pre;transform:scaleX(1.0273);transform-origin:0 50%;">Control</span><span style="position:absolute;left:1173.50px;top:57.15px;font-family:'Liberation Sans', sans-serif;font-size:14px;line-height:18px;color:#000;white-space:pre;transform:scaleX(1.0000);transform-origin:0 50%;">@</span><span style="position:absolute;left:1191.25px;top:57.15px;font-family:'Liberation Sans', sans-serif;font-size:14px;line-height:18px;color:#000;white-space:pre;transform:scaleX(1.0249);transform-origin:0 50%;">aidas1</span>
<svg style="left:1249.5px;top:62.3px" width="9" height="9" viewBox="0 0 9 9"><path d="M1.2 1.2 L7.8 7.8 M7.8 1.2 L1.2 7.8" stroke="#2e2e2e" stroke-width="2" fill="none"/></svg>
<div style="position:absolute;left:1281px;top:66px;width:12px;height:2px;background:#4a4a4a;"></div>
<div style="position:absolute;left:1286px;top:61px;width:2px;height:12px;background:#4a4a4a;"></div>
<div style="position:absolute;left:654px;top:89px;width:783px;height:24px;box-sizing:border-box;background:#fff;border:1px solid #b3b1af;border-radius:2px;"></div>
<div style="position:absolute;left:628px;top:85px;width:32px;height:32px;box-sizing:border-box;border-radius:50%;background:#f7f7f7;border:1px solid #a9a7a5;"></div>
<svg style="left:636px;top:92px" width="16" height="18" viewBox="0 0 16 18"><path d="M8.6 1 L1.3 9 L8.6 17 L10.9 14.8 L7.2 10.8 L15 10.8 L15 7.2 L7.2 7.2 L10.9 3.2 Z" fill="#555" stroke="#555" stroke-width="0.5" stroke-linejoin="round"/></svg>
<svg style="left:665px;top:92px" width="18" height="18" viewBox="0 0 18 18"><circle cx="8" cy="9.2" r="6.4" fill="none" stroke="#555" stroke-width="1.05"/><rect x="7.2" y="8" width="1.6" height="4.8" fill="#505050"/><circle cx="8" cy="6" r="1" fill="#505050"/><circle cx="13.4" cy="3.5" r="3.1" fill="#fff"/><circle cx="13.4" cy="3.5" r="2.35" fill="#5e5e5e"/></svg>
<div style="position:absolute;left:686px;top:93px;width:1px;height:16px;background:#c4c2c0;"></div>
<span style="position:absolute;left:692.60px;top:92.01px;font-family:'Liberation Sans', sans-serif;font-size:14.4px;line-height:18px;color:#111;white-space:pre;letter-spacing:0.211px;">localhost</span>
<span style="position:absolute;left:751.30px;top:92.01px;font-family:'Liberation Sans', sans-serif;font-size:14.4px;line-height:18px;color:#8e8e8e;white-space:pre;letter-spacing:-0.128px;">:8115/MERGE/Merge.tml</span>
<div style="position:absolute;left:1353px;top:94px;width:42px;height:14px;border-radius:7px;background:#ebebeb;"></div>
<span style="position:absolute;left:1362.00px;top:93.68px;font-family:'Liberation Sans', sans-serif;font-size:11.6px;line-height:15px;color:#3c3c3c;white-space:pre;letter-spacing:0.427px;">80%</span>
<div style="position:absolute;left:1403px;top:93px;width:1px;height:16px;background:#c4c2c0;"></div>
<svg style="left:1413px;top:94px" width="14" height="14" viewBox="0 0 14 14"><path d="M10.6 9.6 A4.6 4.6 0 1 1 9.4 3.4" fill="none" stroke="#6d7b8f" stroke-width="1.9"/><path d="M7.6 1 L12.6 1 L12.6 6 Z" fill="#6d7b8f"/></svg>
<div style="position:absolute;left:1444px;top:89px;width:243px;height:24px;box-sizing:border-box;background:#fff;border:1px solid #b3b1af;border-radius:2px;"></div>
<svg style="left:1449px;top:93px" width="15" height="15" viewBox="0 0 15 15"><circle cx="5.6" cy="5.6" r="4" fill="none" stroke="#7a7a7a" stroke-width="1.7"/><path d="M8.4 8.4 L13 13" stroke="#7a7a7a" stroke-width="2.3" stroke-linecap="round"/></svg>
<span style="position:absolute;left:1468.40px;top:92.01px;font-family:'Liberation Sans', sans-serif;font-size:14.4px;line-height:18px;color:#8a8a8a;white-space:pre;letter-spacing:-0.435px;">Search</span>
<svg style="left:1700px;top:92px" width="18" height="18" viewBox="0 0 18 18"><polygon points="9.00,0.70 11.29,6.14 17.18,6.64 12.71,10.51 14.05,16.26 9.00,13.20 3.95,16.26 5.29,10.51 0.82,6.64 6.71,6.14" fill="#1787ee" stroke="#1787ee" stroke-width="1" stroke-linejoin="round"/></svg>
<div style="position:absolute;left:1724px;top:92px;width:1px;height:18px;background:#c4c2c0;"></div>
<svg style="left:1732px;top:92px" width="16" height="17" viewBox="0 0 16 17"><path d="M8 0.6 L11.2 3.4 L4.8 3.4 Z" fill="#4c4c4c"/><rect x="1" y="3.2" width="14" height="13" rx="1.6" fill="#4c4c4c"/><rect x="3" y="6" width="1.8" height="1.8" fill="#ededed"/><rect x="5.8" y="6" width="7.2" height="1.8" fill="#ededed"/><rect x="3" y="9" width="1.8" height="1.8" fill="#ededed"/><rect x="5.8" y="9" width="7.2" height="1.8" fill="#ededed"/><rect x="3" y="12" width="1.8" height="1.8" fill="#ededed"/><rect x="5.8" y="12" width="7.2" height="1.8" fill="#ededed"/></svg>
<svg style="left:1770px;top:94px" width="16" height="15" viewBox="0 0 16 15"><path d="M5.4 0.4 L10.6 0.4 L10.6 6.6 L15.2 6.6 L8 14.2 L0.8 6.6 L5.4 6.6 Z" fill="#4c4c4c"/></svg>
<svg style="left:1808px;top:93px" width="16" height="16" viewBox="0 0 16 16"><path d="M8 1.8 L15.4 8.4 L14.4 9.4 L8 3.8 L1.6 9.4 L0.6 8.4 Z" fill="#4c4c4c"/><path d="M3 9 L8 4.8 L13 9 L13 15 L9.6 15 L9.6 10.6 L6.4 10.6 L6.4 15 L3 15 Z" fill="#4c4c4c"/></svg>
<svg style="left:1845px;top:94px" width="18" height="15" viewBox="0 0 18 15"><path d="M2.4 0.4 L15.6 0.4 C16.6 0.4 17.2 1 17.2 2 L17.2 6.4 C17.2 11 13.4 14.4 9 14.4 C4.6 14.4 0.8 11 0.8 6.4 L0.8 2 C0.8 1 1.4 0.4 2.4 0.4 Z" fill="#4c4c4c"/><path d="M5 5 L9 8.8 L13 5" fill="none" stroke="#ededed" stroke-width="1.9" stroke-linecap="round" stroke-linejoin="round"/></svg>
<div style="position:absolute;left:1875px;top:84px;width:1px;height:34px;background:#dad8d6;"></div>
<div style="position:absolute;left:1889px;top:94.2px;width:16px;height:2.8px;border-radius:1.4px;background:#4c4c4c;"></div>
<div style="position:absolute;left:1889px;top:99.5px;width:16px;height:2.8px;border-radius:1.4px;background:#4c4c4c;"></div>
<div style="position:absolute;left:1889px;top:104.7px;width:16px;height:2.8px;border-radius:1.4px;background:#4c4c4c;"></div>
<!-- page content -->
<div style="position:absolute;left:624px;top:122px;width:1279px;height:927px;background:#ffebcd;"></div>
<div style="position:absolute;left:623px;top:122px;width:1px;height:930px;background:#fffcf2;"></div>
<div style="position:absolute;left:1918px;top:122px;width:1px;height:930px;background:#f4f4f4;"></div>
<div style="position:absolute;left:624px;top:1049px;width:1294px;height:1px;background:#e4e3e2;"></div>
<div style="position:absolute;left:624px;top:1050px;width:1294px;height:1px;background:#efeeed;"></div>
<div style="position:absolute;left:624px;top:1051px;width:1294px;height:1px;background:#fdfdfd;"></div>
<span style="position:absolute;left:630.30px;top:145.06px;font-family:'Liberation Serif', serif;font-size:17px;line-height:21px;color:#ff0000;white-space:pre;transform:scaleX(0.9534);transform-origin:0 50%;font-weight:bold;-webkit-text-stroke:0.25px #ff0000;">MERGE:</span><span style="position:absolute;left:702.50px;top:145.06px;font-family:'Liberation Serif', serif;font-size:17px;line-height:21px;color:#ff0000;white-space:pre;transform:scaleX(1.0630);transform-origin:0 50%;font-weight:bold;-webkit-text-stroke:0.25px #ff0000;">Control</span><span style="position:absolute;left:768.50px;top:145.06px;font-family:'Liberation Serif', serif;font-size:17px;line-height:21px;color:#ff0000;white-space:pre;transform:scaleX(0.8733);transform-origin:0 50%;font-weight:bold;-webkit-text-stroke:0.25px #ff0000;">@</span><span style="position:absolute;left:787.40px;top:145.06px;font-family:'Liberation Serif', serif;font-size:17px;line-height:21px;color:#ff0000;white-space:pre;transform:scaleX(1.0897);transform-origin:0 50%;font-weight:bold;-webkit-text-stroke:0.25px #ff0000;">aidas1</span>
<span style="position:absolute;left:1465.30px;top:145.36px;font-family:'Liberation Serif', serif;font-size:17px;line-height:21px;color:#ff0000;white-space:pre;transform:scaleX(1.1002);transform-origin:0 50%;font-weight:bold;-webkit-text-stroke:0.25px #ff0000;">client</span><span style="position:absolute;left:1515.70px;top:145.36px;font-family:'Liberation Serif', serif;font-size:17px;line-height:21px;color:#ff0000;white-space:pre;transform:scaleX(1.0930);transform-origin:0 50%;font-weight:bold;-webkit-text-stroke:0.25px #ff0000;">address</span><span style="position:absolute;left:1582.70px;top:145.36px;font-family:'Liberation Serif', serif;font-size:17px;line-height:21px;color:#ff0000;white-space:pre;transform:scaleX(0.9895);transform-origin:0 50%;font-weight:bold;-webkit-text-stroke:0.25px #ff0000;">is</span><span style="position:absolute;left:1599.52px;top:145.36px;font-family:'Liberation Serif', serif;font-size:17px;line-height:21px;color:#ff0000;white-space:pre;transform:scaleX(1.1823);transform-origin:0 50%;font-weight:bold;-webkit-text-stroke:0.25px #ff0000;">127.0.0.1</span>
<svg style="left:1808px;top:128px" width="51" height="52" viewBox="0 0 51 52"><rect width="51" height="52" fill="#f9c900"/><circle cx="7.2" cy="7.2" r="4.7" fill="#12306e"/><path d="M4.2 9.4 L7.2 4.4 L10.2 9.4 Z" fill="#fff"/><path d="M3.4 10.2 C5.8 11.4 8.6 11.4 11 10.2 L10.4 11.4 C8.4 12.4 6 12.4 4 11.4 Z" fill="#12306e"/><path d="M39 1.6 L47 1.6 L47 6 C47 8.4 45 9.8 43 10.6 C41 9.8 39 8.4 39 6 Z" fill="#1d3fb0"/><rect x="40.6" y="3" width="4.8" height="1.2" fill="#cfd8f4"/><rect x="41.4" y="5.6" width="3.2" height="1" fill="#cfd8f4"/><path d="M2.6 28.6 L2.6 27.6 L5 27 L5.6 13.8 L3 13.2 L3 12.2 L10.6 12.2 L15 22.2 L19.2 12.2 L26.4 12.2 L26.4 13.2 L24.2 13.8 L24.6 27 L26.8 27.6 L26.8 28.6 L17 28.6 L17 27.6 L19.2 27 L19 15.8 L13.6 28.6 L12.2 28.6 L7 16 L6.8 27 L9.2 27.6 L9.2 28.6 Z" fill="#000"/><text x="24.2" y="26.2" font-family="'Liberation Sans',sans-serif" font-weight="bold" font-size="11.5" textLength="25.5" lengthAdjust="spacingAndGlyphs" fill="#000">idas</text><rect x="4" y="35.8" width="15" height="1.1" fill="#3a3000" opacity="0.85"/><rect x="26.4" y="32.6" width="11.2" height="16.8" fill="#d4240c"/><rect x="26" y="32.2" width="12" height="17.6" fill="none" stroke="#ffe000" stroke-width="0.8"/><path d="M31.6 35 C33.6 35.4 33 39 32.6 42 L32 46 L31 42 C30.4 39 30.2 35.6 31.6 35 Z" fill="#2c5fd0"/><rect x="27.6" y="46" width="8.6" height="1.6" fill="#f08a80"/></svg>
<svg style="left:1864px;top:127px" width="34" height="54" viewBox="0 0 34 54"><path d="M1.6 44 L28 44 L27.6 52.6 L0.2 51 Z" fill="#0c34a8"/><path d="M29 9.6 L31.8 9.2 L30.4 27 L29 27 Z" fill="#0c34a8"/><path d="M2.4 2 L14 0.6 L31 2.4 L30.4 45 L2 45.4 Z" fill="#d4380a"/><path d="M8 3 L10.4 2.6 L9.6 9 L8.6 9 Z" fill="#f7a300"/><path d="M10.6 4 L13.6 2.2 L11 11 L10 11 Z" fill="#f7a300"/><path d="M24 9 L25.6 9 L23.6 15 L22.6 15 Z" fill="#f7c000"/><path d="M27 9 L28.4 9.4 L27 12.6 L26 12.6 Z" fill="#f7c000"/><path d="M19.4 5.6 C21.6 5.2 23.2 7 22.4 9.6 C21.6 11.4 20.6 13.4 20.8 16 C21 18 21.8 20 21.4 23 C21 27 19.6 31 18.4 35 L16.4 43.4 L15.2 36 C13.6 35.6 13.4 33.6 14 32.4 C12.2 31 12 28.6 12.8 27 C11.4 25 11.4 22 12.4 20 C12.2 15 14.4 9.6 17 6.8 C17.8 6 18.6 5.7 19.4 5.6 Z" fill="#1743c0"/><path d="M18.8 9 C16.6 16 15.8 27 16.6 40" fill="none" stroke="#e8d0c0" stroke-width="0.9"/><path d="M14.4 24 L12.6 27 M14.8 29 L13.8 32.4 M18.8 22 L21 19.6 M18.4 28 L20.4 25.6" stroke="#d4380a" stroke-width="0.6" fill="none"/><text x="3" y="42" font-family="'Liberation Sans',sans-serif" font-weight="bold" font-size="6.6" textLength="13" lengthAdjust="spacingAndGlyphs" fill="#f6e8d8">TCL</text><text x="4.4" y="50.6" font-family="'Liberation Sans',sans-serif" font-weight="bold" font-size="5.6" textLength="21.6" lengthAdjust="spacingAndGlyphs" fill="#f4f000">POWERED</text></svg>
<div style="position:absolute;left:630px;top:209px;width:1266px;height:1px;background:#5f5f5f;"></div>
<div style="position:absolute;left:630px;top:210px;width:1266px;height:1px;background:#e6dcca;"></div>
<span style="position:absolute;left:718.40px;top:216.92px;font-family:'Liberation Serif', serif;font-size:27.8px;line-height:33px;color:#ff0000;white-space:pre;transform:scaleX(1.1730);transform-origin:0 50%;font-weight:bold;-webkit-text-stroke:0.45px #ff0000;">Merge</span><span style="position:absolute;left:817.75px;top:216.92px;font-family:'Liberation Serif', serif;font-size:27.8px;line-height:33px;color:#ff0000;white-space:pre;transform:scaleX(1.2485);transform-origin:0 50%;font-weight:bold;-webkit-text-stroke:0.45px #ff0000;">State</span><span style="position:absolute;left:902.95px;top:216.92px;font-family:'Liberation Serif', serif;font-size:27.8px;line-height:33px;color:#ff0000;white-space:pre;transform:scaleX(1.2500);transform-origin:0 50%;font-weight:bold;-webkit-text-stroke:0.45px #ff0000;">=</span><span style="position:absolute;left:931.37px;top:216.92px;font-family:'Liberation Serif', serif;font-size:27.8px;line-height:33px;color:#ff0000;white-space:pre;transform:scaleX(1.1306);transform-origin:0 50%;font-weight:bold;-webkit-text-stroke:0.45px #ff0000;">GOing</span><span style="position:absolute;left:1066.64px;top:216.92px;font-family:'Liberation Serif', serif;font-size:27.8px;line-height:33px;color:#ff0000;white-space:pre;transform:scaleX(1.2800);transform-origin:0 50%;font-weight:bold;-webkit-text-stroke:0.45px #ff0000;">:</span><span style="position:absolute;left:1113.60px;top:216.92px;font-family:'Liberation Serif', serif;font-size:27.8px;line-height:33px;color:#ff0000;white-space:pre;transform:scaleX(1.2142);transform-origin:0 50%;font-weight:bold;-webkit-text-stroke:0.45px #ff0000;">merging</span><span style="position:absolute;left:1278.14px;top:216.92px;font-family:'Liberation Serif', serif;font-size:27.8px;line-height:33px;color:#ff0000;white-space:pre;transform:scaleX(1.2800);transform-origin:0 50%;font-weight:bold;-webkit-text-stroke:0.45px #ff0000;">:</span><span style="position:absolute;left:1323.30px;top:216.92px;font-family:'Liberation Serif', serif;font-size:27.8px;line-height:33px;color:#ff0000;white-space:pre;transform:scaleX(1.1939);transform-origin:0 50%;font-weight:bold;-webkit-text-stroke:0.45px #ff0000;">xfer</span><span style="position:absolute;left:1388.30px;top:216.92px;font-family:'Liberation Serif', serif;font-size:27.8px;line-height:33px;color:#ff0000;white-space:pre;transform:scaleX(1.2165);transform-origin:0 50%;font-weight:bold;-webkit-text-stroke:0.45px #ff0000;">enabled</span><span style="position:absolute;left:1545.74px;top:216.92px;font-family:'Liberation Serif', serif;font-size:27.8px;line-height:33px;color:#ff0000;white-space:pre;transform:scaleX(1.2800);transform-origin:0 50%;font-weight:bold;-webkit-text-stroke:0.45px #ff0000;">:</span><span style="position:absolute;left:1591.70px;top:216.92px;font-family:'Liberation Serif', serif;font-size:27.8px;line-height:33px;color:#ff0000;white-space:pre;transform:scaleX(1.1595);transform-origin:0 50%;font-weight:bold;-webkit-text-stroke:0.45px #ff0000;">ready</span><span style="position:absolute;left:1680.00px;top:216.92px;font-family:'Liberation Serif', serif;font-size:27.8px;line-height:33px;color:#ff0000;white-space:pre;transform:scaleX(0.9472);transform-origin:0 50%;font-weight:bold;-webkit-text-stroke:0.45px #ff0000;">for</span><span style="position:absolute;left:1730.70px;top:216.92px;font-family:'Liberation Serif', serif;font-size:27.8px;line-height:33px;color:#ff0000;white-space:pre;transform:scaleX(1.0501);transform-origin:0 50%;font-weight:bold;-webkit-text-stroke:0.45px #ff0000;">DATA</span>
<span style="position:absolute;left:941.95px;top:274.02px;font-family:'Liberation Serif', serif;font-size:27.8px;line-height:33px;color:#ff0000;white-space:pre;transform:scaleX(1.1471);transform-origin:0 50%;font-weight:bold;-webkit-text-stroke:0.45px #ff0000;">Current</span><span style="position:absolute;left:1065.20px;top:274.02px;font-family:'Liberation Serif', serif;font-size:27.8px;line-height:33px;color:#ff0000;white-space:pre;transform:scaleX(1.1747);transform-origin:0 50%;font-weight:bold;-webkit-text-stroke:0.45px #ff0000;">merged</span><span style="position:absolute;left:1180.82px;top:274.02px;font-family:'Liberation Serif', serif;font-size:27.8px;line-height:33px;color:#ff0000;white-space:pre;transform:scaleX(1.1799);transform-origin:0 50%;font-weight:bold;-webkit-text-stroke:0.45px #ff0000;">data</span><span style="position:absolute;left:1254.20px;top:274.02px;font-family:'Liberation Serif', serif;font-size:27.8px;line-height:33px;color:#ff0000;white-space:pre;transform:scaleX(1.2107);transform-origin:0 50%;font-weight:bold;-webkit-text-stroke:0.45px #ff0000;">rate</span><span style="position:absolute;left:1322.04px;top:274.02px;font-family:'Liberation Serif', serif;font-size:27.8px;line-height:33px;color:#ff0000;white-space:pre;transform:scaleX(1.2643);transform-origin:0 50%;font-weight:bold;-webkit-text-stroke:0.45px #ff0000;">=</span><span style="position:absolute;left:1350.39px;top:274.02px;font-family:'Liberation Serif', serif;font-size:27.8px;line-height:33px;color:#ff0000;white-space:pre;transform:scaleX(1.3063);transform-origin:0 50%;font-weight:bold;-webkit-text-stroke:0.45px #ff0000;">70262</span><span style="position:absolute;left:1451.00px;top:274.02px;font-family:'Liberation Serif', serif;font-size:27.8px;line-height:33px;color:#ff0000;white-space:pre;transform:scaleX(1.2405);transform-origin:0 50%;font-weight:bold;-webkit-text-stroke:0.45px #ff0000;">items/sec</span>
<span style="position:absolute;left:1224.00px;top:357.12px;font-family:'Liberation Serif', serif;font-size:27.8px;line-height:33px;color:#ff0000;white-space:pre;transform:scaleX(1.1543);transform-origin:0 50%;font-weight:bold;-webkit-text-stroke:0.45px #ff0000;">Links</span>
<div style="position:absolute;left:890px;top:390px;width:747px;height:136px;box-sizing:border-box;border:1px solid;border-color:#d2d2d2 #5a5a5a #5a5a5a #d2d2d2;"></div>
<div style="position:absolute;left:894px;top:395px;width:43px;height:29px;box-sizing:border-box;background:#32cd32;border:1px solid;border-color:#3f3f3f #e9dcc6 #e9dcc6 #3f3f3f;"></div>
<div style="position:absolute;left:902.2px;top:399.3px;width:26px;height:20px;box-sizing:border-box;border:1px solid #8c8a88;border-radius:4.5px;background:linear-gradient(#ffffff 0%,#fbfbfb 40%,#e6e6e6 100%);box-shadow:0 0 0 1px rgba(255,255,255,0.4), inset 0 0 0 1px #fff;font-family:'Liberation Sans',sans-serif;font-size:11.2px;line-height:18.6px;text-align:center;color:#000;letter-spacing:0.3px;">0</div>
<div style="position:absolute;left:940px;top:395px;width:44px;height:29px;box-sizing:border-box;background:#32cd32;border:1px solid;border-color:#3f3f3f #e9dcc6 #e9dcc6 #3f3f3f;"></div>
<div style="position:absolute;left:948.7px;top:399.3px;width:26px;height:20px;box-sizing:border-box;border:1px solid #8c8a88;border-radius:4.5px;background:linear-gradient(#ffffff 0%,#fbfbfb 40%,#e6e6e6 100%);box-shadow:0 0 0 1px rgba(255,255,255,0.4), inset 0 0 0 1px #fff;font-family:'Liberation Sans',sans-serif;font-size:11.2px;line-height:18.6px;text-align:center;color:#000;letter-spacing:0.3px;">1</div>
<div style="position:absolute;left:987px;top:395px;width:43px;height:29px;box-sizing:border-box;background:#32cd32;border:1px solid;border-color:#3f3f3f #e9dcc6 #e9dcc6 #3f3f3f;"></div>
<div style="position:absolute;left:995.2px;top:399.3px;width:26px;height:20px;box-sizing:border-box;border:1px solid #8c8a88;border-radius:4.5px;background:linear-gradient(#ffffff 0%,#fbfbfb 40%,#e6e6e6 100%);box-shadow:0 0 0 1px rgba(255,255,255,0.4), inset 0 0 0 1px #fff;font-family:'Liberation Sans',sans-serif;font-size:11.2px;line-height:18.6px;text-align:center;color:#000;letter-spacing:0.3px;">2</div>
<div style="position:absolute;left:1033px;top:395px;width:43px;height:29px;box-sizing:border-box;background:#32cd32;border:1px solid;border-color:#3f3f3f #e9dcc6 #e9dcc6 #3f3f3f;"></div>
<div style="position:absolute;left:1041.2px;top:399.3px;width:26px;height:20px;box-sizing:border-box;border:1px solid #8c8a88;border-radius:4.5px;background:linear-gradient(#ffffff 0%,#fbfbfb 40%,#e6e6e6 100%);box-shadow:0 0 0 1px rgba(255,255,255,0.4), inset 0 0 0 1px #fff;font-family:'Liberation Sans',sans-serif;font-size:11.2px;line-height:18.6px;text-align:center;color:#000;letter-spacing:0.3px;">3</div>
<div style="position:absolute;left:1080px;top:395px;width:43px;height:29px;box-sizing:border-box;background:#32cd32;border:1px solid;border-color:#3f3f3f #e9dcc6 #e9dcc6 #3f3f3f;"></div>
<div style="position:absolute;left:1088.2px;top:399.3px;width:26px;height:20px;box-sizing:border-box;border:1px solid #8c8a88;border-radius:4.5px;background:linear-gradient(#ffffff 0%,#fbfbfb 40%,#e6e6e6 100%);box-shadow:0 0 0 1px rgba(255,255,255,0.4), inset 0 0 0 1px #fff;font-family:'Liberation Sans',sans-serif;font-size:11.2px;line-height:18.6px;text-align:center;color:#000;letter-spacing:0.3px;">4</div>
<div style="position:absolute;left:1126px;top:395px;width:43px;height:29px;box-sizing:border-box;background:#32cd32;border:1px solid;border-color:#3f3f3f #e9dcc6 #e9dcc6 #3f3f3f;"></div>
<div style="position:absolute;left:1134.2px;top:399.3px;width:26px;height:20px;box-sizing:border-box;border:1px solid #8c8a88;border-radius:4.5px;background:linear-gradient(#ffffff 0%,#fbfbfb 40%,#e6e6e6 100%);box-shadow:0 0 0 1px rgba(255,255,255,0.4), inset 0 0 0 1px #fff;font-family:'Liberation Sans',sans-serif;font-size:11.2px;line-height:18.6px;text-align:center;color:#000;letter-spacing:0.3px;">5</div>
<div style="position:absolute;left:1172px;top:395px;width:44px;height:29px;box-sizing:border-box;background:#32cd32;border:1px solid;border-color:#3f3f3f #e9dcc6 #e9dcc6 #3f3f3f;"></div>
<div style="position:absolute;left:1180.7px;top:399.3px;width:26px;height:20px;box-sizing:border-box;border:1px solid #8c8a88;border-radius:4.5px;background:linear-gradient(#ffffff 0%,#fbfbfb 40%,#e6e6e6 100%);box-shadow:0 0 0 1px rgba(255,255,255,0.4), inset 0 0 0 1px #fff;font-family:'Liberation Sans',sans-serif;font-size:11.2px;line-height:18.6px;text-align:center;color:#000;letter-spacing:0.3px;">6</div>
<div style="position:absolute;left:1219px;top:395px;width:43px;height:29px;box-sizing:border-box;background:#32cd32;border:1px solid;border-color:#3f3f3f #e9dcc6 #e9dcc6 #3f3f3f;"></div>
<div style="position:absolute;left:1227.2px;top:399.3px;width:26px;height:20px;box-sizing:border-box;border:1px solid #8c8a88;border-radius:4.5px;background:linear-gradient(#ffffff 0%,#fbfbfb 40%,#e6e6e6 100%);box-shadow:0 0 0 1px rgba(255,255,255,0.4), inset 0 0 0 1px #fff;font-family:'Liberation Sans',sans-serif;font-size:11.2px;line-height:18.6px;text-align:center;color:#000;letter-spacing:0.3px;">7</div>
<div style="position:absolute;left:1265px;top:395px;width:43px;height:29px;box-sizing:border-box;background:#32cd32;border:1px solid;border-color:#3f3f3f #e9dcc6 #e9dcc6 #3f3f3f;"></div>
<div style="position:absolute;left:1273.2px;top:399.3px;width:26px;height:20px;box-sizing:border-box;border:1px solid #8c8a88;border-radius:4.5px;background:linear-gradient(#ffffff 0%,#fbfbfb 40%,#e6e6e6 100%);box-shadow:0 0 0 1px rgba(255,255,255,0.4), inset 0 0 0 1px #fff;font-family:'Liberation Sans',sans-serif;font-size:11.2px;line-height:18.6px;text-align:center;color:#000;letter-spacing:0.3px;">8</div>
<div style="position:absolute;left:1312px;top:395px;width:43px;height:29px;box-sizing:border-box;background:#32cd32;border:1px solid;border-color:#3f3f3f #e9dcc6 #e9dcc6 #3f3f3f;"></div>
<div style="position:absolute;left:1320.2px;top:399.3px;width:26px;height:20px;box-sizing:border-box;border:1px solid #8c8a88;border-radius:4.5px;background:linear-gradient(#ffffff 0%,#fbfbfb 40%,#e6e6e6 100%);box-shadow:0 0 0 1px rgba(255,255,255,0.4), inset 0 0 0 1px #fff;font-family:'Liberation Sans',sans-serif;font-size:11.2px;line-height:18.6px;text-align:center;color:#000;letter-spacing:0.3px;">9</div>
<div style="position:absolute;left:1358px;top:395px;width:43px;height:29px;box-sizing:border-box;background:#32cd32;border:1px solid;border-color:#3f3f3f #e9dcc6 #e9dcc6 #3f3f3f;"></div>
<div style="position:absolute;left:1362.2px;top:399.3px;width:34px;height:20px;box-sizing:border-box;border:1px solid #8c8a88;border-radius:4.5px;background:linear-gradient(#ffffff 0%,#fbfbfb 40%,#e6e6e6 100%);box-shadow:0 0 0 1px rgba(255,255,255,0.4), inset 0 0 0 1px #fff;font-family:'Liberation Sans',sans-serif;font-size:11.2px;line-height:18.6px;text-align:center;color:#000;letter-spacing:0.3px;">10</div>
<div style="position:absolute;left:1404px;top:395px;width:44px;height:29px;box-sizing:border-box;background:#32cd32;border:1px solid;border-color:#3f3f3f #e9dcc6 #e9dcc6 #3f3f3f;"></div>
<div style="position:absolute;left:1408.7px;top:399.3px;width:34px;height:20px;box-sizing:border-box;border:1px solid #8c8a88;border-radius:4.5px;background:linear-gradient(#ffffff 0%,#fbfbfb 40%,#e6e6e6 100%);box-shadow:0 0 0 1px rgba(255,255,255,0.4), inset 0 0 0 1px #fff;font-family:'Liberation Sans',sans-serif;font-size:11.2px;line-height:18.6px;text-align:center;color:#000;letter-spacing:0.3px;">11</div>
<div style="position:absolute;left:1451px;top:395px;width:43px;height:29px;box-sizing:border-box;background:#32cd32;border:1px solid;border-color:#3f3f3f #e9dcc6 #e9dcc6 #3f3f3f;"></div>
<div style="position:absolute;left:1455.2px;top:399.3px;width:34px;height:20px;box-sizing:border-box;border:1px solid #8c8a88;border-radius:4.5px;background:linear-gradient(#ffffff 0%,#fbfbfb 40%,#e6e6e6 100%);box-shadow:0 0 0 1px rgba(255,255,255,0.4), inset 0 0 0 1px #fff;font-family:'Liberation Sans',sans-serif;font-size:11.2px;line-height:18.6px;text-align:center;color:#000;letter-spacing:0.3px;">12</div>
<div style="position:absolute;left:1497px;top:395px;width:43px;height:29px;box-sizing:border-box;background:#32cd32;border:1px solid;border-color:#3f3f3f #e9dcc6 #e9dcc6 #3f3f3f;"></div>
<div style="position:absolute;left:1501.2px;top:399.3px;width:34px;height:20px;box-sizing:border-box;border:1px solid #8c8a88;border-radius:4.5px;background:linear-gradient(#ffffff 0%,#fbfbfb 40%,#e6e6e6 100%);box-shadow:0 0 0 1px rgba(255,255,255,0.4), inset 0 0 0 1px #fff;font-family:'Liberation Sans',sans-serif;font-size:11.2px;line-height:18.6px;text-align:center;color:#000;letter-spacing:0.3px;">13</div>
<div style="position:absolute;left:1544px;top:395px;width:43px;height:29px;box-sizing:border-box;background:#32cd32;border:1px solid;border-color:#3f3f3f #e9dcc6 #e9dcc6 #3f3f3f;"></div>
<div style="position:absolute;left:1548.2px;top:399.3px;width:34px;height:20px;box-sizing:border-box;border:1px solid #8c8a88;border-radius:4.5px;background:linear-gradient(#ffffff 0%,#fbfbfb 40%,#e6e6e6 100%);box-shadow:0 0 0 1px rgba(255,255,255,0.4), inset 0 0 0 1px #fff;font-family:'Liberation Sans',sans-serif;font-size:11.2px;line-height:18.6px;text-align:center;color:#000;letter-spacing:0.3px;">14</div>
<div style="position:absolute;left:1590px;top:395px;width:43px;height:29px;box-sizing:border-box;background:#32cd32;border:1px solid;border-color:#3f3f3f #e9dcc6 #e9dcc6 #3f3f3f;"></div>
<div style="position:absolute;left:1594.2px;top:399.3px;width:34px;height:20px;box-sizing:border-box;border:1px solid #8c8a88;border-radius:4.5px;background:linear-gradient(#ffffff 0%,#fbfbfb 40%,#e6e6e6 100%);box-shadow:0 0 0 1px rgba(255,255,255,0.4), inset 0 0 0 1px #fff;font-family:'Liberation Sans',sans-serif;font-size:11.2px;line-height:18.6px;text-align:center;color:#000;letter-spacing:0.3px;">15</div>
<div style="position:absolute;left:894px;top:427px;width:43px;height:30px;box-sizing:border-box;background:#32cd32;border:1px solid;border-color:#3f3f3f #e9dcc6 #e9dcc6 #3f3f3f;"></div>
<div style="position:absolute;left:898.2px;top:431.6px;width:34px;height:20px;box-sizing:border-box;border:1px solid #8c8a88;border-radius:4.5px;background:linear-gradient(#ffffff 0%,#fbfbfb 40%,#e6e6e6 100%);box-shadow:0 0 0 1px rgba(255,255,255,0.4), inset 0 0 0 1px #fff;font-family:'Liberation Sans',sans-serif;font-size:11.2px;line-height:18.6px;text-align:center;color:#000;letter-spacing:0.3px;">16</div>
<div style="position:absolute;left:940px;top:427px;width:44px;height:30px;box-sizing:border-box;background:#32cd32;border:1px solid;border-color:#3f3f3f #e9dcc6 #e9dcc6 #3f3f3f;"></div>
<div style="position:absolute;left:944.7px;top:431.6px;width:34px;height:20px;box-sizing:border-box;border:1px solid #8c8a88;border-radius:4.5px;background:linear-gradient(#ffffff 0%,#fbfbfb 40%,#e6e6e6 100%);box-shadow:0 0 0 1px rgba(255,255,255,0.4), inset 0 0 0 1px #fff;font-family:'Liberation Sans',sans-serif;font-size:11.2px;line-height:18.6px;text-align:center;color:#000;letter-spacing:0.3px;">17</div>
<div style="position:absolute;left:987px;top:427px;width:43px;height:30px;box-sizing:border-box;background:#32cd32;border:1px solid;border-color:#3f3f3f #e9dcc6 #e9dcc6 #3f3f3f;"></div>
<div style="position:absolute;left:991.2px;top:431.6px;width:34px;height:20px;box-sizing:border-box;border:1px solid #8c8a88;border-radius:4.5px;background:linear-gradient(#ffffff 0%,#fbfbfb 40%,#e6e6e6 100%);box-shadow:0 0 0 1px rgba(255,255,255,0.4), inset 0 0 0 1px #fff;font-family:'Liberation Sans',sans-serif;font-size:11.2px;line-height:18.6px;text-align:center;color:#000;letter-spacing:0.3px;">18</div>
<div style="position:absolute;left:1033px;top:427px;width:43px;height:30px;box-sizing:border-box;background:#32cd32;border:1px solid;border-color:#3f3f3f #e9dcc6 #e9dcc6 #3f3f3f;"></div>
<div style="position:absolute;left:1037.2px;top:431.6px;width:34px;height:20px;box-sizing:border-box;border:1px solid #8c8a88;border-radius:4.5px;background:linear-gradient(#ffffff 0%,#fbfbfb 40%,#e6e6e6 100%);box-shadow:0 0 0 1px rgba(255,255,255,0.4), inset 0 0 0 1px #fff;font-family:'Liberation Sans',sans-serif;font-size:11.2px;line-height:18.6px;text-align:center;color:#000;letter-spacing:0.3px;">19</div>
<div style="position:absolute;left:1080px;top:427px;width:43px;height:30px;box-sizing:border-box;background:#32cd32;border:1px solid;border-color:#3f3f3f #e9dcc6 #e9dcc6 #3f3f3f;"></div>
<div style="position:absolute;left:1084.2px;top:431.6px;width:34px;height:20px;box-sizing:border-box;border:1px solid #8c8a88;border-radius:4.5px;background:linear-gradient(#ffffff 0%,#fbfbfb 40%,#e6e6e6 100%);box-shadow:0 0 0 1px rgba(255,255,255,0.4), inset 0 0 0 1px #fff;font-family:'Liberation Sans',sans-serif;font-size:11.2px;line-height:18.6px;text-align:center;color:#000;letter-spacing:0.3px;">20</div>
<div style="position:absolute;left:1126px;top:427px;width:43px;height:30px;box-sizing:border-box;background:#32cd32;border:1px solid;border-color:#3f3f3f #e9dcc6 #e9dcc6 #3f3f3f;"></div>
<div style="position:absolute;left:1130.2px;top:431.6px;width:34px;height:20px;box-sizing:border-box;border:1px solid #8c8a88;border-radius:4.5px;background:linear-gradient(#ffffff 0%,#fbfbfb 40%,#e6e6e6 100%);box-shadow:0 0 0 1px rgba(255,255,255,0.4), inset 0 0 0 1px #fff;font-family:'Liberation Sans',sans-serif;font-size:11.2px;line-height:18.6px;text-align:center;color:#000;letter-spacing:0.3px;">21</div>
<div style="position:absolute;left:1172px;top:427px;width:44px;height:30px;box-sizing:border-box;background:#32cd32;border:1px solid;border-color:#3f3f3f #e9dcc6 #e9dcc6 #3f3f3f;"></div>
<div style="position:absolute;left:1176.7px;top:431.6px;width:34px;height:20px;box-sizing:border-box;border:1px solid #8c8a88;border-radius:4.5px;background:linear-gradient(#ffffff 0%,#fbfbfb 40%,#e6e6e6 100%);box-shadow:0 0 0 1px rgba(255,255,255,0.4), inset 0 0 0 1px #fff;font-family:'Liberation Sans',sans-serif;font-size:11.2px;line-height:18.6px;text-align:center;color:#000;letter-spacing:0.3px;">22</div>
<div style="position:absolute;left:1219px;top:427px;width:43px;height:30px;box-sizing:border-box;background:#32cd32;border:1px solid;border-color:#3f3f3f #e9dcc6 #e9dcc6 #3f3f3f;"></div>
<div style="position:absolute;left:1223.2px;top:431.6px;width:34px;height:20px;box-sizing:border-box;border:1px solid #8c8a88;border-radius:4.5px;background:linear-gradient(#ffffff 0%,#fbfbfb 40%,#e6e6e6 100%);box-shadow:0 0 0 1px rgba(255,255,255,0.4), inset 0 0 0 1px #fff;font-family:'Liberation Sans',sans-serif;font-size:11.2px;line-height:18.6px;text-align:center;color:#000;letter-spacing:0.3px;">23</div>
<div style="position:absolute;left:1265px;top:427px;width:43px;height:30px;box-sizing:border-box;background:#ff0000;border:1px solid;border-color:#3f3f3f #e9dcc6 #e9dcc6 #3f3f3f;"></div>
<div style="position:absolute;left:1269.2px;top:431.6px;width:34px;height:20px;box-sizing:border-box;border:1px solid #8c8a88;border-radius:4.5px;background:linear-gradient(#ffffff 0%,#fbfbfb 40%,#e6e6e6 100%);box-shadow:0 0 0 1px rgba(255,255,255,0.4), inset 0 0 0 1px #fff;font-family:'Liberation Sans',sans-serif;font-size:11.2px;line-height:18.6px;text-align:center;color:#000;letter-spacing:0.3px;">24</div>
<div style="position:absolute;left:1312px;top:427px;width:43px;height:30px;box-sizing:border-box;background:#ff0000;border:1px solid;border-color:#3f3f3f #e9dcc6 #e9dcc6 #3f3f3f;"></div>
<div style="position:absolute;left:1316.2px;top:431.6px;width:34px;height:20px;box-sizing:border-box;border:1px solid #8c8a88;border-radius:4.5px;background:linear-gradient(#ffffff 0%,#fbfbfb 40%,#e6e6e6 100%);box-shadow:0 0 0 1px rgba(255,255,255,0.4), inset 0 0 0 1px #fff;font-family:'Liberation Sans',sans-serif;font-size:11.2px;line-height:18.6px;text-align:center;color:#000;letter-spacing:0.3px;">25</div>
<div style="position:absolute;left:1358px;top:427px;width:43px;height:30px;box-sizing:border-box;background:#ff0000;border:1px solid;border-color:#3f3f3f #e9dcc6 #e9dcc6 #3f3f3f;"></div>
<div style="position:absolute;left:1362.2px;top:431.6px;width:34px;height:20px;box-sizing:border-box;border:1px solid #8c8a88;border-radius:4.5px;background:linear-gradient(#ffffff 0%,#fbfbfb 40%,#e6e6e6 100%);box-shadow:0 0 0 1px rgba(255,255,255,0.4), inset 0 0 0 1px #fff;font-family:'Liberation Sans',sans-serif;font-size:11.2px;line-height:18.6px;text-align:center;color:#000;letter-spacing:0.3px;">26</div>
<div style="position:absolute;left:1404px;top:427px;width:44px;height:30px;box-sizing:border-box;background:#ff0000;border:1px solid;border-color:#3f3f3f #e9dcc6 #e9dcc6 #3f3f3f;"></div>
<div style="position:absolute;left:1408.7px;top:431.6px;width:34px;height:20px;box-sizing:border-box;border:1px solid #8c8a88;border-radius:4.5px;background:linear-gradient(#ffffff 0%,#fbfbfb 40%,#e6e6e6 100%);box-shadow:0 0 0 1px rgba(255,255,255,0.4), inset 0 0 0 1px #fff;font-family:'Liberation Sans',sans-serif;font-size:11.2px;line-height:18.6px;text-align:center;color:#000;letter-spacing:0.3px;">27</div>
<div style="position:absolute;left:1451px;top:427px;width:43px;height:30px;box-sizing:border-box;background:#ff0000;border:1px solid;border-color:#3f3f3f #e9dcc6 #e9dcc6 #3f3f3f;"></div>
<div style="position:absolute;left:1455.2px;top:431.6px;width:34px;height:20px;box-sizing:border-box;border:1px solid #8c8a88;border-radius:4.5px;background:linear-gradient(#ffffff 0%,#fbfbfb 40%,#e6e6e6 100%);box-shadow:0 0 0 1px rgba(255,255,255,0.4), inset 0 0 0 1px #fff;font-family:'Liberation Sans',sans-serif;font-size:11.2px;line-height:18.6px;text-align:center;color:#000;letter-spacing:0.3px;">28</div>
<div style="position:absolute;left:1497px;top:427px;width:43px;height:30px;box-sizing:border-box;background:#ff0000;border:1px solid;border-color:#3f3f3f #e9dcc6 #e9dcc6 #3f3f3f;"></div>
<div style="position:absolute;left:1501.2px;top:431.6px;width:34px;height:20px;box-sizing:border-box;border:1px solid #8c8a88;border-radius:4.5px;background:linear-gradient(#ffffff 0%,#fbfbfb 40%,#e6e6e6 100%);box-shadow:0 0 0 1px rgba(255,255,255,0.4), inset 0 0 0 1px #fff;font-family:'Liberation Sans',sans-serif;font-size:11.2px;line-height:18.6px;text-align:center;color:#000;letter-spacing:0.3px;">29</div>
<div style="position:absolute;left:1544px;top:427px;width:43px;height:30px;box-sizing:border-box;background:#ff0000;border:1px solid;border-color:#3f3f3f #e9dcc6 #e9dcc6 #3f3f3f;"></div>
<div style="position:absolute;left:1548.2px;top:431.6px;width:34px;height:20px;box-sizing:border-box;border:1px solid #8c8a88;border-radius:4.5px;background:linear-gradient(#ffffff 0%,#fbfbfb 40%,#e6e6e6 100%);box-shadow:0 0 0 1px rgba(255,255,255,0.4), inset 0 0 0 1px #fff;font-family:'Liberation Sans',sans-serif;font-size:11.2px;line-height:18.6px;text-align:center;color:#000;letter-spacing:0.3px;">30</div>
<div style="position:absolute;left:1590px;top:427px;width:43px;height:30px;box-sizing:border-box;background:#ff0000;border:1px solid;border-color:#3f3f3f #e9dcc6 #e9dcc6 #3f3f3f;"></div>
<div style="position:absolute;left:1594.2px;top:431.6px;width:34px;height:20px;box-sizing:border-box;border:1px solid #8c8a88;border-radius:4.5px;background:linear-gradient(#ffffff 0%,#fbfbfb 40%,#e6e6e6 100%);box-shadow:0 0 0 1px rgba(255,255,255,0.4), inset 0 0 0 1px #fff;font-family:'Liberation Sans',sans-serif;font-size:11.2px;line-height:18.6px;text-align:center;color:#000;letter-spacing:0.3px;">31</div>
<div style="position:absolute;left:894px;top:460px;width:43px;height:29px;box-sizing:border-box;background:#ff0000;border:1px solid;border-color:#3f3f3f #e9dcc6 #e9dcc6 #3f3f3f;"></div>
<div style="position:absolute;left:898.2px;top:464.3px;width:34px;height:20px;box-sizing:border-box;border:1px solid #8c8a88;border-radius:4.5px;background:linear-gradient(#ffffff 0%,#fbfbfb 40%,#e6e6e6 100%);box-shadow:0 0 0 1px rgba(255,255,255,0.4), inset 0 0 0 1px #fff;font-family:'Liberation Sans',sans-serif;font-size:11.2px;line-height:18.6px;text-align:center;color:#000;letter-spacing:0.3px;">32</div>
<div style="position:absolute;left:940px;top:460px;width:44px;height:29px;box-sizing:border-box;background:#ff0000;border:1px solid;border-color:#3f3f3f #e9dcc6 #e9dcc6 #3f3f3f;"></div>
<div style="position:absolute;left:944.7px;top:464.3px;width:34px;height:20px;box-sizing:border-box;border:1px solid #8c8a88;border-radius:4.5px;background:linear-gradient(#ffffff 0%,#fbfbfb 40%,#e6e6e6 100%);box-shadow:0 0 0 1px rgba(255,255,255,0.4), inset 0 0 0 1px #fff;font-family:'Liberation Sans',sans-serif;font-size:11.2px;line-height:18.6px;text-align:center;color:#000;letter-spacing:0.3px;">33</div>
<div style="position:absolute;left:987px;top:460px;width:43px;height:29px;box-sizing:border-box;background:#ff0000;border:1px solid;border-color:#3f3f3f #e9dcc6 #e9dcc6 #3f3f3f;"></div>
<div style="position:absolute;left:991.2px;top:464.3px;width:34px;height:20px;box-sizing:border-box;border:1px solid #8c8a88;border-radius:4.5px;background:linear-gradient(#ffffff 0%,#fbfbfb 40%,#e6e6e6 100%);box-shadow:0 0 0 1px rgba(255,255,255,0.4), inset 0 0 0 1px #fff;font-family:'Liberation Sans',sans-serif;font-size:11.2px;line-height:18.6px;text-align:center;color:#000;letter-spacing:0.3px;">34</div>
<div style="position:absolute;left:1033px;top:460px;width:43px;height:29px;box-sizing:border-box;background:#ff0000;border:1px solid;border-color:#3f3f3f #e9dcc6 #e9dcc6 #3f3f3f;"></div>
<div style="position:absolute;left:1037.2px;top:464.3px;width:34px;height:20px;box-sizing:border-box;border:1px solid #8c8a88;border-radius:4.5px;background:linear-gradient(#ffffff 0%,#fbfbfb 40%,#e6e6e6 100%);box-shadow:0 0 0 1px rgba(255,255,255,0.4), inset 0 0 0 1px #fff;font-family:'Liberation Sans',sans-serif;font-size:11.2px;line-height:18.6px;text-align:center;color:#000;letter-spacing:0.3px;">35</div>
<div style="position:absolute;left:1080px;top:460px;width:43px;height:29px;box-sizing:border-box;background:#ff0000;border:1px solid;border-color:#3f3f3f #e9dcc6 #e9dcc6 #3f3f3f;"></div>
<div style="position:absolute;left:1084.2px;top:464.3px;width:34px;height:20px;box-sizing:border-box;border:1px solid #8c8a88;border-radius:4.5px;background:linear-gradient(#ffffff 0%,#fbfbfb 40%,#e6e6e6 100%);box-shadow:0 0 0 1px rgba(255,255,255,0.4), inset 0 0 0 1px #fff;font-family:'Liberation Sans',sans-serif;font-size:11.2px;line-height:18.6px;text-align:center;color:#000;letter-spacing:0.3px;">36</div>
<div style="position:absolute;left:1126px;top:460px;width:43px;height:29px;box-sizing:border-box;background:#ff0000;border:1px solid;border-color:#3f3f3f #e9dcc6 #e9dcc6 #3f3f3f;"></div>
<div style="position:absolute;left:1130.2px;top:464.3px;width:34px;height:20px;box-sizing:border-box;border:1px solid #8c8a88;border-radius:4.5px;background:linear-gradient(#ffffff 0%,#fbfbfb 40%,#e6e6e6 100%);box-shadow:0 0 0 1px rgba(255,255,255,0.4), inset 0 0 0 1px #fff;font-family:'Liberation Sans',sans-serif;font-size:11.2px;line-height:18.6px;text-align:center;color:#000;letter-spacing:0.3px;">37</div>
<div style="position:absolute;left:1172px;top:460px;width:44px;height:29px;box-sizing:border-box;background:#ff0000;border:1px solid;border-color:#3f3f3f #e9dcc6 #e9dcc6 #3f3f3f;"></div>
<div style="position:absolute;left:1176.7px;top:464.3px;width:34px;height:20px;box-sizing:border-box;border:1px solid #8c8a88;border-radius:4.5px;background:linear-gradient(#ffffff 0%,#fbfbfb 40%,#e6e6e6 100%);box-shadow:0 0 0 1px rgba(255,255,255,0.4), inset 0 0 0 1px #fff;font-family:'Liberation Sans',sans-serif;font-size:11.2px;line-height:18.6px;text-align:center;color:#000;letter-spacing:0.3px;">38</div>
<div style="position:absolute;left:1219px;top:460px;width:43px;height:29px;box-sizing:border-box;background:#ff0000;border:1px solid;border-color:#3f3f3f #e9dcc6 #e9dcc6 #3f3f3f;"></div>
<div style="position:absolute;left:1223.2px;top:464.3px;width:34px;height:20px;box-sizing:border-box;border:1px solid #8c8a88;border-radius:4.5px;background:linear-gradient(#ffffff 0%,#fbfbfb 40%,#e6e6e6 100%);box-shadow:0 0 0 1px rgba(255,255,255,0.4), inset 0 0 0 1px #fff;font-family:'Liberation Sans',sans-serif;font-size:11.2px;line-height:18.6px;text-align:center;color:#000;letter-spacing:0.3px;">39</div>
<div style="position:absolute;left:1265px;top:460px;width:43px;height:29px;box-sizing:border-box;background:#ff0000;border:1px solid;border-color:#3f3f3f #e9dcc6 #e9dcc6 #3f3f3f;"></div>
<div style="position:absolute;left:1269.2px;top:464.3px;width:34px;height:20px;box-sizing:border-box;border:1px solid #8c8a88;border-radius:4.5px;background:linear-gradient(#ffffff 0%,#fbfbfb 40%,#e6e6e6 100%);box-shadow:0 0 0 1px rgba(255,255,255,0.4), inset 0 0 0 1px #fff;font-family:'Liberation Sans',sans-serif;font-size:11.2px;line-height:18.6px;text-align:center;color:#000;letter-spacing:0.3px;">40</div>
<div style="position:absolute;left:1312px;top:460px;width:43px;height:29px;box-sizing:border-box;background:#ff0000;border:1px solid;border-color:#3f3f3f #e9dcc6 #e9dcc6 #3f3f3f;"></div>
<div style="position:absolute;left:1316.2px;top:464.3px;width:34px;height:20px;box-sizing:border-box;border:1px solid #8c8a88;border-radius:4.5px;background:linear-gradient(#ffffff 0%,#fbfbfb 40%,#e6e6e6 100%);box-shadow:0 0 0 1px rgba(255,255,255,0.4), inset 0 0 0 1px #fff;font-family:'Liberation Sans',sans-serif;font-size:11.2px;line-height:18.6px;text-align:center;color:#000;letter-spacing:0.3px;">41</div>
<div style="position:absolute;left:1358px;top:460px;width:43px;height:29px;box-sizing:border-box;background:#ff0000;border:1px solid;border-color:#3f3f3f #e9dcc6 #e9dcc6 #3f3f3f;"></div>
<div style="position:absolute;left:1362.2px;top:464.3px;width:34px;height:20px;box-sizing:border-box;border:1px solid #8c8a88;border-radius:4.5px;background:linear-gradient(#ffffff 0%,#fbfbfb 40%,#e6e6e6 100%);box-shadow:0 0 0 1px rgba(255,255,255,0.4), inset 0 0 0 1px #fff;font-family:'Liberation Sans',sans-serif;font-size:11.2px;line-height:18.6px;text-align:center;color:#000;letter-spacing:0.3px;">42</div>
<div style="position:absolute;left:1404px;top:460px;width:44px;height:29px;box-sizing:border-box;background:#ff0000;border:1px solid;border-color:#3f3f3f #e9dcc6 #e9dcc6 #3f3f3f;"></div>
<div style="position:absolute;left:1408.7px;top:464.3px;width:34px;height:20px;box-sizing:border-box;border:1px solid #8c8a88;border-radius:4.5px;background:linear-gradient(#ffffff 0%,#fbfbfb 40%,#e6e6e6 100%);box-shadow:0 0 0 1px rgba(255,255,255,0.4), inset 0 0 0 1px #fff;font-family:'Liberation Sans',sans-serif;font-size:11.2px;line-height:18.6px;text-align:center;color:#000;letter-spacing:0.3px;">43</div>
<div style="position:absolute;left:1451px;top:460px;width:43px;height:29px;box-sizing:border-box;background:#ff0000;border:1px solid;border-color:#3f3f3f #e9dcc6 #e9dcc6 #3f3f3f;"></div>
<div style="position:absolute;left:1455.2px;top:464.3px;width:34px;height:20px;box-sizing:border-box;border:1px solid #8c8a88;border-radius:4.5px;background:linear-gradient(#ffffff 0%,#fbfbfb 40%,#e6e6e6 100%);box-shadow:0 0 0 1px rgba(255,255,255,0.4), inset 0 0 0 1px #fff;font-family:'Liberation Sans',sans-serif;font-size:11.2px;line-height:18.6px;text-align:center;color:#000;letter-spacing:0.3px;">44</div>
<div style="position:absolute;left:1497px;top:460px;width:43px;height:29px;box-sizing:border-box;background:#ff0000;border:1px solid;border-color:#3f3f3f #e9dcc6 #e9dcc6 #3f3f3f;"></div>
<div style="position:absolute;left:1501.2px;top:464.3px;width:34px;height:20px;box-sizing:border-box;border:1px solid #8c8a88;border-radius:4.5px;background:linear-gradient(#ffffff 0%,#fbfbfb 40%,#e6e6e6 100%);box-shadow:0 0 0 1px rgba(255,255,255,0.4), inset 0 0 0 1px #fff;font-family:'Liberation Sans',sans-serif;font-size:11.2px;line-height:18.6px;text-align:center;color:#000;letter-spacing:0.3px;">45</div>
<div style="position:absolute;left:1544px;top:460px;width:43px;height:29px;box-sizing:border-box;background:#ff0000;border:1px solid;border-color:#3f3f3f #e9dcc6 #e9dcc6 #3f3f3f;"></div>
<div style="position:absolute;left:1548.2px;top:464.3px;width:34px;height:20px;box-sizing:border-box;border:1px solid #8c8a88;border-radius:4.5px;background:linear-gradient(#ffffff 0%,#fbfbfb 40%,#e6e6e6 100%);box-shadow:0 0 0 1px rgba(255,255,255,0.4), inset 0 0 0 1px #fff;font-family:'Liberation Sans',sans-serif;font-size:11.2px;line-height:18.6px;text-align:center;color:#000;letter-spacing:0.3px;">46</div>
<div style="position:absolute;left:1590px;top:460px;width:43px;height:29px;box-sizing:border-box;background:#ff0000;border:1px solid;border-color:#3f3f3f #e9dcc6 #e9dcc6 #3f3f3f;"></div>
<div style="position:absolute;left:1594.2px;top:464.3px;width:34px;height:20px;box-sizing:border-box;border:1px solid #8c8a88;border-radius:4.5px;background:linear-gradient(#ffffff 0%,#fbfbfb 40%,#e6e6e6 100%);box-shadow:0 0 0 1px rgba(255,255,255,0.4), inset 0 0 0 1px #fff;font-family:'Liberation Sans',sans-serif;font-size:11.2px;line-height:18.6px;text-align:center;color:#000;letter-spacing:0.3px;">47</div>
<div style="position:absolute;left:894px;top:492px;width:43px;height:30px;box-sizing:border-box;background:#ff0000;border:1px solid;border-color:#3f3f3f #e9dcc6 #e9dcc6 #3f3f3f;"></div>
<div style="position:absolute;left:898.2px;top:496.6px;width:34px;height:20px;box-sizing:border-box;border:1px solid #8c8a88;border-radius:4.5px;background:linear-gradient(#ffffff 0%,#fbfbfb 40%,#e6e6e6 100%);box-shadow:0 0 0 1px rgba(255,255,255,0.4), inset 0 0 0 1px #fff;font-family:'Liberation Sans',sans-serif;font-size:11.2px;line-height:18.6px;text-align:center;color:#000;letter-spacing:0.3px;">48</div>
<div style="position:absolute;left:940px;top:492px;width:44px;height:30px;box-sizing:border-box;background:#ff0000;border:1px solid;border-color:#3f3f3f #e9dcc6 #e9dcc6 #3f3f3f;"></div>
<div style="position:absolute;left:944.7px;top:496.6px;width:34px;height:20px;box-sizing:border-box;border:1px solid #8c8a88;border-radius:4.5px;background:linear-gradient(#ffffff 0%,#fbfbfb 40%,#e6e6e6 100%);box-shadow:0 0 0 1px rgba(255,255,255,0.4), inset 0 0 0 1px #fff;font-family:'Liberation Sans',sans-serif;font-size:11.2px;line-height:18.6px;text-align:center;color:#000;letter-spacing:0.3px;">49</div>
<div style="position:absolute;left:987px;top:492px;width:43px;height:30px;box-sizing:border-box;background:#ff0000;border:1px solid;border-color:#3f3f3f #e9dcc6 #e9dcc6 #3f3f3f;"></div>
<div style="position:absolute;left:991.2px;top:496.6px;width:34px;height:20px;box-sizing:border-box;border:1px solid #8c8a88;border-radius:4.5px;background:linear-gradient(#ffffff 0%,#fbfbfb 40%,#e6e6e6 100%);box-shadow:0 0 0 1px rgba(255,255,255,0.4), inset 0 0 0 1px #fff;font-family:'Liberation Sans',sans-serif;font-size:11.2px;line-height:18.6px;text-align:center;color:#000;letter-spacing:0.3px;">50</div>
<div style="position:absolute;left:1033px;top:492px;width:43px;height:30px;box-sizing:border-box;background:#ff0000;border:1px solid;border-color:#3f3f3f #e9dcc6 #e9dcc6 #3f3f3f;"></div>
<div style="position:absolute;left:1037.2px;top:496.6px;width:34px;height:20px;box-sizing:border-box;border:1px solid #8c8a88;border-radius:4.5px;background:linear-gradient(#ffffff 0%,#fbfbfb 40%,#e6e6e6 100%);box-shadow:0 0 0 1px rgba(255,255,255,0.4), inset 0 0 0 1px #fff;font-family:'Liberation Sans',sans-serif;font-size:11.2px;line-height:18.6px;text-align:center;color:#000;letter-spacing:0.3px;">51</div>
<div style="position:absolute;left:1080px;top:492px;width:43px;height:30px;box-sizing:border-box;background:#ff0000;border:1px solid;border-color:#3f3f3f #e9dcc6 #e9dcc6 #3f3f3f;"></div>
<div style="position:absolute;left:1084.2px;top:496.6px;width:34px;height:20px;box-sizing:border-box;border:1px solid #8c8a88;border-radius:4.5px;background:linear-gradient(#ffffff 0%,#fbfbfb 40%,#e6e6e6 100%);box-shadow:0 0 0 1px rgba(255,255,255,0.4), inset 0 0 0 1px #fff;font-family:'Liberation Sans',sans-serif;font-size:11.2px;line-height:18.6px;text-align:center;color:#000;letter-spacing:0.3px;">52</div>
<div style="position:absolute;left:1126px;top:492px;width:43px;height:30px;box-sizing:border-box;background:#ff0000;border:1px solid;border-color:#3f3f3f #e9dcc6 #e9dcc6 #3f3f3f;"></div>
<div style="position:absolute;left:1130.2px;top:496.6px;width:34px;height:20px;box-sizing:border-box;border:1px solid #8c8a88;border-radius:4.5px;background:linear-gradient(#ffffff 0%,#fbfbfb 40%,#e6e6e6 100%);box-shadow:0 0 0 1px rgba(255,255,255,0.4), inset 0 0 0 1px #fff;font-family:'Liberation Sans',sans-serif;font-size:11.2px;line-height:18.6px;text-align:center;color:#000;letter-spacing:0.3px;">53</div>
<div style="position:absolute;left:1172px;top:492px;width:44px;height:30px;box-sizing:border-box;background:#ff0000;border:1px solid;border-color:#3f3f3f #e9dcc6 #e9dcc6 #3f3f3f;"></div>
<div style="position:absolute;left:1176.7px;top:496.6px;width:34px;height:20px;box-sizing:border-box;border:1px solid #8c8a88;border-radius:4.5px;background:linear-gradient(#ffffff 0%,#fbfbfb 40%,#e6e6e6 100%);box-shadow:0 0 0 1px rgba(255,255,255,0.4), inset 0 0 0 1px #fff;font-family:'Liberation Sans',sans-serif;font-size:11.2px;line-height:18.6px;text-align:center;color:#000;letter-spacing:0.3px;">54</div>
<div style="position:absolute;left:1219px;top:492px;width:43px;height:30px;box-sizing:border-box;background:#ff0000;border:1px solid;border-color:#3f3f3f #e9dcc6 #e9dcc6 #3f3f3f;"></div>
<div style="position:absolute;left:1223.2px;top:496.6px;width:34px;height:20px;box-sizing:border-box;border:1px solid #8c8a88;border-radius:4.5px;background:linear-gradient(#ffffff 0%,#fbfbfb 40%,#e6e6e6 100%);box-shadow:0 0 0 1px rgba(255,255,255,0.4), inset 0 0 0 1px #fff;font-family:'Liberation Sans',sans-serif;font-size:11.2px;line-height:18.6px;text-align:center;color:#000;letter-spacing:0.3px;">55</div>
<div style="position:absolute;left:1265px;top:492px;width:43px;height:30px;box-sizing:border-box;background:#ff0000;border:1px solid;border-color:#3f3f3f #e9dcc6 #e9dcc6 #3f3f3f;"></div>
<div style="position:absolute;left:1269.2px;top:496.6px;width:34px;height:20px;box-sizing:border-box;border:1px solid #8c8a88;border-radius:4.5px;background:linear-gradient(#ffffff 0%,#fbfbfb 40%,#e6e6e6 100%);box-shadow:0 0 0 1px rgba(255,255,255,0.4), inset 0 0 0 1px #fff;font-family:'Liberation Sans',sans-serif;font-size:11.2px;line-height:18.6px;text-align:center;color:#000;letter-spacing:0.3px;">56</div>
<div style="position:absolute;left:1312px;top:492px;width:43px;height:30px;box-sizing:border-box;background:#ff0000;border:1px solid;border-color:#3f3f3f #e9dcc6 #e9dcc6 #3f3f3f;"></div>
<div style="position:absolute;left:1316.2px;top:496.6px;width:34px;height:20px;box-sizing:border-box;border:1px solid #8c8a88;border-radius:4.5px;background:linear-gradient(#ffffff 0%,#fbfbfb 40%,#e6e6e6 100%);box-shadow:0 0 0 1px rgba(255,255,255,0.4), inset 0 0 0 1px #fff;font-family:'Liberation Sans',sans-serif;font-size:11.2px;line-height:18.6px;text-align:center;color:#000;letter-spacing:0.3px;">57</div>
<div style="position:absolute;left:1358px;top:492px;width:43px;height:30px;box-sizing:border-box;background:#ff0000;border:1px solid;border-color:#3f3f3f #e9dcc6 #e9dcc6 #3f3f3f;"></div>
<div style="position:absolute;left:1362.2px;top:496.6px;width:34px;height:20px;box-sizing:border-box;border:1px solid #8c8a88;border-radius:4.5px;background:linear-gradient(#ffffff 0%,#fbfbfb 40%,#e6e6e6 100%);box-shadow:0 0 0 1px rgba(255,255,255,0.4), inset 0 0 0 1px #fff;font-family:'Liberation Sans',sans-serif;font-size:11.2px;line-height:18.6px;text-align:center;color:#000;letter-spacing:0.3px;">58</div>
<div style="position:absolute;left:1404px;top:492px;width:44px;height:30px;box-sizing:border-box;background:#ff0000;border:1px solid;border-color:#3f3f3f #e9dcc6 #e9dcc6 #3f3f3f;"></div>
<div style="position:absolute;left:1408.7px;top:496.6px;width:34px;height:20px;box-sizing:border-box;border:1px solid #8c8a88;border-radius:4.5px;background:linear-gradient(#ffffff 0%,#fbfbfb 40%,#e6e6e6 100%);box-shadow:0 0 0 1px rgba(255,255,255,0.4), inset 0 0 0 1px #fff;font-family:'Liberation Sans',sans-serif;font-size:11.2px;line-height:18.6px;text-align:center;color:#000;letter-spacing:0.3px;">59</div>
<div style="position:absolute;left:1451px;top:492px;width:43px;height:30px;box-sizing:border-box;background:#ff0000;border:1px solid;border-color:#3f3f3f #e9dcc6 #e9dcc6 #3f3f3f;"></div>
<div style="position:absolute;left:1455.2px;top:496.6px;width:34px;height:20px;box-sizing:border-box;border:1px solid #8c8a88;border-radius:4.5px;background:linear-gradient(#ffffff 0%,#fbfbfb 40%,#e6e6e6 100%);box-shadow:0 0 0 1px rgba(255,255,255,0.4), inset 0 0 0 1px #fff;font-family:'Liberation Sans',sans-serif;font-size:11.2px;line-height:18.6px;text-align:center;color:#000;letter-spacing:0.3px;">60</div>
<div style="position:absolute;left:1497px;top:492px;width:43px;height:30px;box-sizing:border-box;background:#ff0000;border:1px solid;border-color:#3f3f3f #e9dcc6 #e9dcc6 #3f3f3f;"></div>
<div style="position:absolute;left:1501.2px;top:496.6px;width:34px;height:20px;box-sizing:border-box;border:1px solid #8c8a88;border-radius:4.5px;background:linear-gradient(#ffffff 0%,#fbfbfb 40%,#e6e6e6 100%);box-shadow:0 0 0 1px rgba(255,255,255,0.4), inset 0 0 0 1px #fff;font-family:'Liberation Sans',sans-serif;font-size:11.2px;line-height:18.6px;text-align:center;color:#000;letter-spacing:0.3px;">61</div>
<div style="position:absolute;left:1544px;top:492px;width:43px;height:30px;box-sizing:border-box;background:#808080;border:1px solid;border-color:#3f3f3f #e9dcc6 #e9dcc6 #3f3f3f;"></div>
<div style="position:absolute;left:1548.2px;top:496.6px;width:34px;height:20px;box-sizing:border-box;border:1px solid #8c8a88;border-radius:4.5px;background:linear-gradient(#ffffff 0%,#fbfbfb 40%,#e6e6e6 100%);box-shadow:0 0 0 1px rgba(255,255,255,0.4), inset 0 0 0 1px #fff;font-family:'Liberation Sans',sans-serif;font-size:11.2px;line-height:18.6px;text-align:center;color:#b4b4b4;letter-spacing:0.3px;">62</div>
<div style="position:absolute;left:1590px;top:492px;width:43px;height:30px;box-sizing:border-box;background:#808080;border:1px solid;border-color:#3f3f3f #e9dcc6 #e9dcc6 #3f3f3f;"></div>
<div style="position:absolute;left:1594.2px;top:496.6px;width:34px;height:20px;box-sizing:border-box;border:1px solid #8c8a88;border-radius:4.5px;background:linear-gradient(#ffffff 0%,#fbfbfb 40%,#e6e6e6 100%);box-shadow:0 0 0 1px rgba(255,255,255,0.4), inset 0 0 0 1px #fff;font-family:'Liberation Sans',sans-serif;font-size:11.2px;line-height:18.6px;text-align:center;color:#b4b4b4;letter-spacing:0.3px;">63</div>
<div style="position:absolute;left:983px;top:584px;width:140.0px;height:27px;box-sizing:border-box;border:1px solid #538312;border-radius:5px;background:linear-gradient(#7db72f,#4e7d0e);box-shadow:0 1px 2px rgba(0,0,0,.2);font-family:'Liberation Sans',sans-serif;font-size:10.85px;line-height:24px;text-align:center;color:#000;text-shadow:0 1px 1px rgba(0,0,0,.3);white-space:pre;">Setup &amp; Configure</div>
<div style="position:absolute;left:1134px;top:584px;width:70.0px;height:27px;box-sizing:border-box;border:1px solid #538312;border-radius:5px;background:linear-gradient(#7db72f,#4e7d0e);box-shadow:0 1px 2px rgba(0,0,0,.2);font-family:'Liberation Sans',sans-serif;font-size:10.85px;line-height:24px;text-align:center;color:#000;text-shadow:0 1px 1px rgba(0,0,0,.3);white-space:pre;">GO</div>
<div style="position:absolute;left:1215px;top:584px;width:82.0px;height:27px;box-sizing:border-box;border:1px solid #538312;border-radius:5px;background:linear-gradient(#7db72f,#4e7d0e);box-shadow:0 1px 2px rgba(0,0,0,.2);font-family:'Liberation Sans',sans-serif;font-size:10.85px;line-height:24px;text-align:center;color:#000;text-shadow:0 1px 1px rgba(0,0,0,.3);white-space:pre;">STOP</div>
<div style="position:absolute;left:1309px;top:584px;width:136.0px;height:27px;box-sizing:border-box;border:1px solid #0076a3;border-radius:5px;background:linear-gradient(#00adee,#0078a5);box-shadow:0 1px 2px rgba(0,0,0,.2);font-family:'Liberation Sans',sans-serif;font-size:10.85px;line-height:24px;text-align:center;color:#000;text-shadow:0 1px 1px rgba(0,0,0,.3);white-space:pre;">Zero Time Stamp</div>
<div style="position:absolute;left:1456px;top:584px;width:88.0px;height:27px;box-sizing:border-box;border:1px solid #d2729e;border-radius:5px;background:linear-gradient(#feb1d3,#f171ab);box-shadow:0 1px 2px rgba(0,0,0,.2);font-family:'Liberation Sans',sans-serif;font-size:10.85px;line-height:24px;text-align:center;color:#000;text-shadow:0 1px 1px rgba(0,0,0,.3);white-space:pre;">Restart</div>
<div style="position:absolute;left:1037px;top:669px;width:225.0px;height:27px;box-sizing:border-box;border:1px solid #0076a3;border-radius:5px;background:linear-gradient(#00adee,#0078a5);box-shadow:0 1px 2px rgba(0,0,0,.2);font-family:'Liberation Sans',sans-serif;font-size:10.85px;line-height:24px;text-align:center;color:#000;text-shadow:0 1px 1px rgba(0,0,0,.3);white-space:pre;">Toggle Merge Program Pause State</div>
<div style="position:absolute;left:1273px;top:669px;width:217.0px;height:27px;box-sizing:border-box;border:1px solid #0076a3;border-radius:5px;background:linear-gradient(#00adee,#0078a5);box-shadow:0 1px 2px rgba(0,0,0,.2);font-family:'Liberation Sans',sans-serif;font-size:10.85px;line-height:24px;text-align:center;color:#000;text-shadow:0 1px 1px rgba(0,0,0,.3);white-space:pre;">Toggle Merge Data Transfer State</div>
<div style="position:absolute;left:1128px;top:754px;width:139.0px;height:27px;box-sizing:border-box;border:1px solid #0076a3;border-radius:5px;background:linear-gradient(#00adee,#0078a5);box-shadow:0 1px 2px rgba(0,0,0,.2);font-family:'Liberation Sans',sans-serif;font-size:10.85px;line-height:24px;text-align:center;color:#000;text-shadow:0 1px 1px rgba(0,0,0,.3);white-space:pre;">MERGE Statistics</div>
<div style="position:absolute;left:1279px;top:754px;width:120.0px;height:27px;box-sizing:border-box;border:1px solid #0076a3;border-radius:5px;background:linear-gradient(#00adee,#0078a5);box-shadow:0 1px 2px rgba(0,0,0,.2);font-family:'Liberation Sans',sans-serif;font-size:10.85px;line-height:24px;text-align:center;color:#000;text-shadow:0 1px 1px rgba(0,0,0,.3);white-space:pre;">MERGE State</div>
<div style="position:absolute;left:1198px;top:832px;width:130.0px;height:27px;box-sizing:border-box;border:1px solid #da7c0c;border-radius:5px;background:linear-gradient(#faa51a,#f47a20);box-shadow:0 1px 2px rgba(0,0,0,.2);font-family:'Liberation Sans',sans-serif;font-size:10.85px;line-height:24px;text-align:center;color:#000;text-shadow:0 1px 1px rgba(0,0,0,.3);white-space:pre;">Data Link Rates</div>
<div style="position:absolute;left:632px;top:982px;width:146.0px;height:27px;box-sizing:border-box;border:1px solid #d2729e;border-radius:5px;background:linear-gradient(#feb1d3,#f171ab);box-shadow:0 1px 2px rgba(0,0,0,.2);font-family:'Liberation Sans',sans-serif;font-size:10.85px;line-height:24px;text-align:center;color:#000;text-shadow:0 1px 1px rgba(0,0,0,.3);white-space:pre;">Empty Log Window</div>
<div style="position:absolute;left:785px;top:982px;width:180.0px;height:27px;box-sizing:border-box;border:1px solid #d2729e;border-radius:5px;background:linear-gradient(#feb1d3,#f171ab);box-shadow:0 1px 2px rgba(0,0,0,.2);font-family:'Liberation Sans',sans-serif;font-size:10.85px;line-height:24px;text-align:center;color:#000;text-shadow:0 1px 1px rgba(0,0,0,.3);white-space:pre;">Send Log Window to ELog</div>
<div style="position:absolute;left:972px;top:982px;width:86.0px;height:27px;box-sizing:border-box;border:1px solid #d2729e;border-radius:5px;background:linear-gradient(#feb1d3,#f171ab);box-shadow:0 1px 2px rgba(0,0,0,.2);font-family:'Liberation Sans',sans-serif;font-size:10.85px;line-height:24px;text-align:center;color:#000;text-shadow:0 1px 1px rgba(0,0,0,.3);white-space:pre;">Reload</div>
<div style="position:absolute;left:1066px;top:982px;width:81.0px;height:27px;box-sizing:border-box;border:1px solid #d2729e;border-radius:5px;background:linear-gradient(#feb1d3,#f171ab);box-shadow:0 1px 2px rgba(0,0,0,.2);font-family:'Liberation Sans',sans-serif;font-size:10.85px;line-height:24px;text-align:center;color:#000;text-shadow:0 1px 1px rgba(0,0,0,.3);white-space:pre;">Reset</div>
<div style="position:absolute;left:1154px;top:982px;width:126.0px;height:27px;box-sizing:border-box;border:1px solid #d2729e;border-radius:5px;background:linear-gradient(#feb1d3,#f171ab);box-shadow:0 1px 2px rgba(0,0,0,.2);font-family:'Liberation Sans',sans-serif;font-size:10.85px;line-height:24px;text-align:center;color:#000;text-shadow:0 1px 1px rgba(0,0,0,.3);white-space:pre;">Show Variables</div>
<div style="position:absolute;left:1287px;top:982px;width:142.0px;height:27px;box-sizing:border-box;border:1px solid #d2729e;border-radius:5px;background:linear-gradient(#feb1d3,#f171ab);box-shadow:0 1px 2px rgba(0,0,0,.2);font-family:'Liberation Sans',sans-serif;font-size:10.85px;line-height:24px;text-align:center;color:#000;text-shadow:0 1px 1px rgba(0,0,0,.3);white-space:pre;">Show Log Window</div>
<div style="position:absolute;left:1436px;top:982px;width:126.0px;height:27px;box-sizing:border-box;border:1px solid #d2729e;border-radius:5px;background:linear-gradient(#feb1d3,#f171ab);box-shadow:0 1px 2px rgba(0,0,0,.2);font-family:'Liberation Sans',sans-serif;font-size:10.85px;line-height:24px;text-align:center;color:#000;text-shadow:0 1px 1px rgba(0,0,0,.3);white-space:pre;">Enable Logging</div>
<div style="position:absolute;left:1762px;top:982px;width:109.0px;height:27px;box-sizing:border-box;border:1px solid #d2729e;border-radius:5px;background:linear-gradient(#feb1d3,#f171ab);box-shadow:0 1px 2px rgba(0,0,0,.2);font-family:'Liberation Sans',sans-serif;font-size:10.85px;line-height:24px;text-align:center;color:#000;text-shadow:0 1px 1px rgba(0,0,0,.3);white-space:pre;">Page Notes</div>
<span style="position:absolute;left:629.91px;top:908.47px;font-family:'Liberation Serif', serif;font-size:16.4px;line-height:20px;color:#ff0000;white-space:pre;transform:scaleX(1.0880);transform-origin:0 50%;-webkit-text-stroke:0.15px #ff0000;">System</span><span style="position:absolute;left:689.30px;top:908.47px;font-family:'Liberation Serif', serif;font-size:16.4px;line-height:20px;color:#ff0000;white-space:pre;transform:scaleX(1.0937);transform-origin:0 50%;-webkit-text-stroke:0.15px #ff0000;">functions</span><span style="position:absolute;left:761.50px;top:908.47px;font-family:'Liberation Serif', serif;font-size:16.4px;line-height:20px;color:#ff0000;white-space:pre;transform:scaleX(1.1171);transform-origin:0 50%;-webkit-text-stroke:0.15px #ff0000;">(Expert</span><span style="position:absolute;left:822.30px;top:908.47px;font-family:'Liberation Serif', serif;font-size:16.4px;line-height:20px;color:#ff0000;white-space:pre;transform:scaleX(1.1499);transform-origin:0 50%;-webkit-text-stroke:0.15px #ff0000;">users</span><span style="position:absolute;left:866.00px;top:908.47px;font-family:'Liberation Serif', serif;font-size:16.4px;line-height:20px;color:#ff0000;white-space:pre;transform:scaleX(1.0352);transform-origin:0 50%;-webkit-text-stroke:0.15px #ff0000;">only</span><span style="position:absolute;left:902.50px;top:908.47px;font-family:'Liberation Serif', serif;font-size:16.4px;line-height:20px;color:#ff0000;white-space:pre;transform:scaleX(1.0227);transform-origin:0 50%;-webkit-text-stroke:0.15px #ff0000;">for</span><span style="position:absolute;left:928.00px;top:908.47px;font-family:'Liberation Serif', serif;font-size:16.4px;line-height:20px;color:#ff0000;white-space:pre;transform:scaleX(1.1358);transform-origin:0 50%;-webkit-text-stroke:0.15px #ff0000;">test/debugging</span><span style="position:absolute;left:1042.90px;top:908.47px;font-family:'Liberation Serif', serif;font-size:16.4px;line-height:20px;color:#ff0000;white-space:pre;transform:scaleX(1.1212);transform-origin:0 50%;-webkit-text-stroke:0.15px #ff0000;">purposes!!!)</span>
<div style="position:absolute;left:1149px;top:911.5px;width:159px;height:18.5px;box-sizing:border-box;border:1px solid #8c8a88;border-radius:3.5px;background:linear-gradient(#ffffff,#f4f4f4 50%,#e8e8e8);box-shadow:0 0 0 1px rgba(255,255,255,0.5);"></div>
<span style="position:absolute;left:1155.00px;top:912.92px;font-family:'Liberation Sans', sans-serif;font-size:11.2px;line-height:15px;color:#111;white-space:pre;letter-spacing:0.561px;">Select required function</span>
<div style="position:absolute;left:1289px;top:914px;width:1px;height:13.5px;background:#cfcdcb;"></div>
<svg style="left:1293px;top:914px" width="9" height="14" viewBox="0 0 9 14"><path d="M1.6 5.2 L4.5 2.2 L7.4 5.2 M1.6 8.8 L4.5 11.8 L7.4 8.8" fill="none" stroke="#333" stroke-width="1.1"/></svg>
<div style="position:absolute;left:1600px;top:1030px;width:303px;height:19px;overflow:hidden;"><span style="position:absolute;left:17.50px;top:6.16px;font-family:'Liberation Serif', serif;font-size:16.4px;line-height:20px;color:#ff0000;white-space:pre;transform:scaleX(1.0710);transform-origin:0 50%;">Last</span><span style="position:absolute;left:55.30px;top:6.16px;font-family:'Liberation Serif', serif;font-size:16.4px;line-height:20px;color:#ff0000;white-space:pre;transform:scaleX(1.1004);transform-origin:0 50%;">Updated:</span><span style="position:absolute;left:127.90px;top:6.16px;font-family:'Liberation Serif', serif;font-size:16.4px;line-height:20px;color:#ff0000;white-space:pre;transform:scaleX(0.9757);transform-origin:0 50%;">May</span><span style="position:absolute;left:164.20px;top:6.16px;font-family:'Liberation Serif', serif;font-size:16.4px;line-height:20px;color:#ff0000;white-space:pre;transform:scaleX(0.8680);transform-origin:0 50%;">26,</span><span style="position:absolute;left:192.50px;top:6.16px;font-family:'Liberation Serif', serif;font-size:16.4px;line-height:20px;color:#ff0000;white-space:pre;transform:scaleX(1.0587);transform-origin:0 50%;">2017</span><span style="position:absolute;left:233.01px;top:6.16px;font-family:'Liberation Serif', serif;font-size:16.4px;line-height:20px;color:#ff0000;white-space:pre;transform:scaleX(1.0914);transform-origin:0 50%;">10:19:13</span></div>
<div style="position:absolute;left:1903px;top:122px;width:15px;height:927px;background:linear-gradient(90deg,#c6c4c1,#d9d7d4 50%,#cfcdca);"></div>
<div style="position:absolute;left:1903px;top:123px;width:15px;height:14px;box-sizing:border-box;border:1px solid #a09e9c;border-radius:3.5px 3.5px 0 0;background:linear-gradient(#ffffff,#e9e8e6);"></div>
<svg style="left:1906px;top:126px" width="9" height="7" viewBox="0 0 9 7"><path d="M1 5.4 L4.5 1.8 L8 5.4" fill="none" stroke="#9a9896" stroke-width="1.3"/></svg>
<div style="position:absolute;left:1903px;top:137px;width:15px;height:849px;box-sizing:border-box;border:1px solid #5a7db3;border-radius:1px;background:linear-gradient(90deg,#abc6eb 0%,#93b4e1 45%,#7fa4d7 100%);"></div>
<div style="position:absolute;left:1908px;top:557px;width:5px;height:1px;background:#4f71a8;"></div>
<div style="position:absolute;left:1908px;top:560px;width:5px;height:1px;background:#4f71a8;"></div>
<div style="position:absolute;left:1908px;top:563px;width:5px;height:1px;background:#4f71a8;"></div>
<div style="position:absolute;left:1903px;top:1034.5px;width:15px;height:14px;box-sizing:border-box;border:1px solid #a09e9c;border-radius:0 0 3.5px 3.5px;background:linear-gradient(#ffffff,#e9e8e6);"></div>
<svg style="left:1906px;top:1038px" width="9" height="7" viewBox="0 0 9 7"><path d="M1 1.6 L4.5 5.2 L8 1.6" fill="none" stroke="#2c2c2c" stroke-width="1.5"/></svg>
<svg style="left:878px;top:834px" width="14" height="22" viewBox="0 0 14 22"><path d="M0.9 1.2 L0.9 18.6 L4.6 15.2 L7 20.2 L9.6 19 L7.4 14 L12.2 13.4 Z" fill="#c8a878" opacity="0.5" transform="translate(0.6,0.7)"/><path d="M0.4 0 L0.4 18.8 L4.4 15 L6.8 20.2 L9.8 18.9 L7.5 13.8 L12.8 13.2 Z" fill="#fff"/><path d="M1.5 2.7 L1.5 16.2 L4.7 13.2 L7.4 18.8 L8.6 18.2 L6 12.5 L10.2 12.3 Z" fill="#000"/></svg>
<!-- bottom panel -->
<div style="position:absolute;left:0px;top:1055px;width:1920px;height:25px;background:#edeceb;"></div>
<div style="position:absolute;left:0px;top:1055px;width:1920px;height:1px;background:#f9f9f8;"></div>
<div style="position:absolute;left:0px;top:1056px;width:1920px;height:1px;background:#f3f2f1;"></div>
<div style="position:absolute;left:622px;top:1052px;width:1298px;height:2px;background:#000;"></div>
<div style="position:absolute;left:661px;top:1053px;width:1259px;height:1px;background:#0c1a33;"></div>
<div style="position:absolute;left:622px;top:1054px;width:1298px;height:1px;background:#8a8d94;"></div>
<svg style="left:3px;top:1058px" width="8" height="21" viewBox="0 0 8 21"><rect x="1" y="1.0" width="1" height="1" fill="#b9b7b4"/><rect x="3.5" y="1.0" width="1" height="1" fill="#b9b7b4"/><rect x="6" y="1.0" width="1" height="1" fill="#b9b7b4"/><rect x="1" y="3.5" width="1" height="1" fill="#b9b7b4"/><rect x="3.5" y="3.5" width="1" height="1" fill="#b9b7b4"/><rect x="6" y="3.5" width="1" height="1" fill="#b9b7b4"/><rect x="1" y="6.0" width="1" height="1" fill="#b9b7b4"/><rect x="3.5" y="6.0" width="1" height="1" fill="#b9b7b4"/><rect x="6" y="6.0" width="1" height="1" fill="#b9b7b4"/><rect x="1" y="8.5" width="1" height="1" fill="#b9b7b4"/><rect x="3.5" y="8.5" width="1" height="1" fill="#b9b7b4"/><rect x="6" y="8.5" width="1" height="1" fill="#b9b7b4"/><rect x="1" y="11.0" width="1" height="1" fill="#b9b7b4"/><rect x="3.5" y="11.0" width="1" height="1" fill="#b9b7b4"/><rect x="6" y="11.0" width="1" height="1" fill="#b9b7b4"/><rect x="1" y="13.5" width="1" height="1" fill="#b9b7b4"/><rect x="3.5" y="13.5" width="1" height="1" fill="#b9b7b4"/><rect x="6" y="13.5" width="1" height="1" fill="#b9b7b4"/><rect x="1" y="16.0" width="1" height="1" fill="#b9b7b4"/><rect x="3.5" y="16.0" width="1" height="1" fill="#b9b7b4"/><rect x="6" y="16.0" width="1" height="1" fill="#b9b7b4"/><rect x="1" y="18.5" width="1" height="1" fill="#b9b7b4"/><rect x="3.5" y="18.5" width="1" height="1" fill="#b9b7b4"/><rect x="6" y="18.5" width="1" height="1" fill="#b9b7b4"/></svg>
<div style="position:absolute;left:13px;top:1057px;width:198px;height:22px;box-sizing:border-box;border:1px solid #9c9a97;border-radius:3.5px;background:linear-gradient(#fbfbfa 0%,#f1f0ef 45%,#e4e3e1 100%);box-shadow:inset 0 0 0 1px rgba(255,255,255,0.7);"></div><svg style="left:19.5px;top:1061px" width="16" height="15" viewBox="0 0 20 18"><defs><linearGradient id="tb4" x1="0" y1="0" x2="0" y2="1"><stop offset="0" stop-color="#d8dbd4"/><stop offset="1" stop-color="#7f827c"/></linearGradient><linearGradient id="ts4" x1="0" y1="0" x2="0" y2="1"><stop offset="0" stop-color="#6a6d69"/><stop offset="0.5" stop-color="#3a3d3c"/><stop offset="1" stop-color="#2c2f30"/></linearGradient></defs><path d="M2 0 L18 0 C19.2 0 20 0.8 20 2 L20 14.6 L17.8 18 L2.2 18 L0 14.6 L0 2 C0 0.8 0.8 0 2 0 Z" fill="#2b3032"/><rect x="1.4" y="1.4" width="17.2" height="13.8" rx="0.8" fill="url(#tb4)"/><rect x="3.1" y="3.1" width="13.8" height="9.2" fill="url(#ts4)" stroke="#25292a" stroke-width="0.9"/><path d="M5.2 5.6 L8 7.8 L5.2 10" fill="none" stroke="#fff" stroke-width="1.05"/><rect x="8.6" y="9.6" width="3.4" height="1.15" fill="#fff"/><rect x="2.4" y="13.2" width="2.6" height="1.1" fill="#73e020"/><rect x="11" y="13.3" width="6" height="0.9" fill="#5c5f5a"/></svg><span style="position:absolute;left:43.50px;top:1059.01px;font-family:'Liberation Sans', sans-serif;font-size:14.4px;line-height:18px;color:#000;white-space:pre;letter-spacing:0.039px;">Terminal</span>
<div style="position:absolute;left:213px;top:1057px;width:199px;height:22px;box-sizing:border-box;border:1px solid #9c9a97;border-radius:3.5px;background:linear-gradient(#fbfbfa 0%,#f1f0ef 45%,#e4e3e1 100%);box-shadow:inset 0 0 0 1px rgba(255,255,255,0.7);"></div><svg style="left:219.5px;top:1061px" width="16" height="15" viewBox="0 0 20 18"><defs><linearGradient id="tb5" x1="0" y1="0" x2="0" y2="1"><stop offset="0" stop-color="#d8dbd4"/><stop offset="1" stop-color="#7f827c"/></linearGradient><linearGradient id="ts5" x1="0" y1="0" x2="0" y2="1"><stop offset="0" stop-color="#6a6d69"/><stop offset="0.5" stop-color="#3a3d3c"/><stop offset="1" stop-color="#2c2f30"/></linearGradient></defs><path d="M2 0 L18 0 C19.2 0 20 0.8 20 2 L20 14.6 L17.8 18 L2.2 18 L0 14.6 L0 2 C0 0.8 0.8 0 2 0 Z" fill="#2b3032"/><rect x="1.4" y="1.4" width="17.2" height="13.8" rx="0.8" fill="url(#tb5)"/><rect x="3.1" y="3.1" width="13.8" height="9.2" fill="url(#ts5)" stroke="#25292a" stroke-width="0.9"/><path d="M5.2 5.6 L8 7.8 L5.2 10" fill="none" stroke="#fff" stroke-width="1.05"/><rect x="8.6" y="9.6" width="3.4" height="1.15" fill="#fff"/><rect x="2.4" y="13.2" width="2.6" height="1.1" fill="#73e020"/><rect x="11" y="13.3" width="6" height="0.9" fill="#5c5f5a"/></svg><span style="position:absolute;left:243.50px;top:1059.01px;font-family:'Liberation Sans', sans-serif;font-size:14.4px;line-height:18px;color:#000;white-space:pre;letter-spacing:0.039px;">Terminal</span>
<div style="position:absolute;left:414px;top:1057px;width:199px;height:22px;box-sizing:border-box;border:1px solid #9c9a97;border-radius:3.5px;background:linear-gradient(#fbfbfa 0%,#f1f0ef 45%,#e4e3e1 100%);box-shadow:inset 0 0 0 1px rgba(255,255,255,0.7);"></div><svg style="left:420.5px;top:1061px" width="16" height="15" viewBox="0 0 20 18"><defs><linearGradient id="tb6" x1="0" y1="0" x2="0" y2="1"><stop offset="0" stop-color="#d8dbd4"/><stop offset="1" stop-color="#7f827c"/></linearGradient><linearGradient id="ts6" x1="0" y1="0" x2="0" y2="1"><stop offset="0" stop-color="#6a6d69"/><stop offset="0.5" stop-color="#3a3d3c"/><stop offset="1" stop-color="#2c2f30"/></linearGradient></defs><path d="M2 0 L18 0 C19.2 0 20 0.8 20 2 L20 14.6 L17.8 18 L2.2 18 L0 14.6 L0 2 C0 0.8 0.8 0 2 0 Z" fill="#2b3032"/><rect x="1.4" y="1.4" width="17.2" height="13.8" rx="0.8" fill="url(#tb6)"/><rect x="3.1" y="3.1" width="13.8" height="9.2" fill="url(#ts6)" stroke="#25292a" stroke-width="0.9"/><path d="M5.2 5.6 L8 7.8 L5.2 10" fill="none" stroke="#fff" stroke-width="1.05"/><rect x="8.6" y="9.6" width="3.4" height="1.15" fill="#fff"/><rect x="2.4" y="13.2" width="2.6" height="1.1" fill="#73e020"/><rect x="11" y="13.3" width="6" height="0.9" fill="#5c5f5a"/></svg><span style="position:absolute;left:444.50px;top:1059.01px;font-family:'Liberation Sans', sans-serif;font-size:14.4px;line-height:18px;color:#000;white-space:pre;letter-spacing:0.039px;">Terminal</span>
<div style="position:absolute;left:615px;top:1057px;width:200px;height:22px;box-sizing:border-box;border:1px solid #8f8d8a;border-radius:3.5px;background:linear-gradient(#d4d3d1,#cbcac8);box-shadow:inset 0 1px 2px rgba(0,0,0,0.18);"></div><svg style="left:623.5px;top:1060.5px" width="15" height="15" viewBox="0 0 20 20"><defs><linearGradient id="fg3" x1="0.3" y1="0" x2="0.6" y2="1"><stop offset="0" stop-color="#5cc6f8"/><stop offset="0.35" stop-color="#1f8fdc"/><stop offset="0.7" stop-color="#0b4aa2"/><stop offset="1" stop-color="#071f5e"/></linearGradient><linearGradient id="fb3" x1="0" y1="0" x2="1" y2="0"><stop offset="0" stop-color="#e55f10"/><stop offset="0.6" stop-color="#ee7a10"/><stop offset="0.8" stop-color="#ffd200"/><stop offset="0.93" stop-color="#ffe000"/><stop offset="1" stop-color="#e8a000"/></linearGradient><linearGradient id="fd3" x1="0" y1="0" x2="0" y2="1"><stop offset="0" stop-color="#d02808" stop-opacity="0"/><stop offset="0.55" stop-color="#d02808" stop-opacity="0"/><stop offset="1" stop-color="#c82408" stop-opacity="0.95"/></linearGradient><linearGradient id="fa3" x1="0" y1="0" x2="1" y2="0"><stop offset="0" stop-color="#e86410"/><stop offset="1" stop-color="#ffc400"/></linearGradient></defs><path d="M1.2 2.4 C1.2 4.4 1.8 5.4 2 6.4 C0.6 8.6 0 10.4 0.2 12 C0.8 16.8 5 20 10 20 C15.4 20 19.8 16 20 10.6 C20.1 7.6 18.6 4.8 16.4 3 C14.6 1.6 12.4 1.4 10.4 1.4 C7.4 1.4 5 2.6 3.6 4.4 C2.6 3.4 1.8 2.8 1.2 2.4 Z" fill="url(#fb3)"/><path d="M1.2 2.4 C1.2 4.4 1.8 5.4 2 6.4 C0.6 8.6 0 10.4 0.2 12 C0.8 16.8 5 20 10 20 C15.4 20 19.8 16 20 10.6 C20.1 7.6 18.6 4.8 16.4 3 C14.6 1.6 12.4 1.4 10.4 1.4 C7.4 1.4 5 2.6 3.6 4.4 C2.6 3.4 1.8 2.8 1.2 2.4 Z" fill="url(#fd3)"/><circle cx="10" cy="7.6" r="7.3" fill="url(#fg3)"/><path d="M14.6 1.9 C17.6 3.6 19.9 7 19.8 10.6 C19.7 12.6 19 14.6 17.8 16 L14.2 15.2 C15.6 13.6 16.2 11.6 15.8 9.6 C15.6 7.4 16 5 14.6 1.9 Z" fill="#ffdc00"/><path d="M17.2 4.4 C18.8 6 19.8 8.4 19.8 10.6 C19.7 12.6 19 14.6 17.8 16 L16.8 15.8 C18.2 13.4 18.6 8.6 17.2 4.4 Z" fill="#f0a800" opacity="0.75"/><path d="M14.2 15.2 L17.8 16 C16.4 17.8 14.4 19.2 12 19.7 L10.4 15.9 C12 16.2 13.2 16 14.2 15.2 Z" fill="#ee7a10"/><path d="M1.8 4 C3 5 4.6 5.2 5.8 4.8 C6.6 4.4 7.2 3.6 8 3.4 C7.6 4.2 7.6 4.8 7.8 5.4 L9.6 6.7 L7.8 7.6 C7.8 8.6 7.2 9.2 6.4 9.6 C5.6 9.8 5.6 10.4 6.6 11.6 L5 15 L0.6 12 Z" fill="#ea6a10"/><path d="M6.6 4.4 C7 3.9 7.4 3.6 8 3.4 C7.6 4.2 7.6 4.8 7.8 5.4 Z" fill="#ffb400"/><path d="M5.4 9.8 C6.4 11.4 8 11.9 9.6 11.6 C10.6 11.4 11.4 11 12.4 11.2 C12 12.2 11 13 9.6 13.6 C7.8 14.2 6 13.9 4.8 13 Z" fill="url(#fa3)"/></svg><span style="position:absolute;left:646.56px;top:1059.15px;font-family:'Liberation Sans', sans-serif;font-size:14px;line-height:18px;color:#000;white-space:pre;transform:scaleX(0.9355);transform-origin:0 50%;">MERGE:</span><span style="position:absolute;left:703.00px;top:1059.15px;font-family:'Liberation Sans', sans-serif;font-size:14px;line-height:18px;color:#000;white-space:pre;transform:scaleX(1.0329);transform-origin:0 50%;">Control</span><span style="position:absolute;left:753.52px;top:1059.15px;font-family:'Liberation Sans', sans-serif;font-size:14px;line-height:18px;color:#000;white-space:pre;transform:scaleX(0.9750);transform-origin:0 50%;">@</span><span style="position:absolute;left:771.20px;top:1059.15px;font-family:'Liberation Sans', sans-serif;font-size:14px;line-height:18px;color:#000;white-space:pre;transform:scaleX(1.0895);transform-origin:0 50%;">aid...</span>
<svg style="left:1598px;top:1056px" width="21" height="23" viewBox="0 0 21 23"><path d="M4 5 L12 2.4 L17 5.4 L17.4 9 L4 9 Z" fill="#e9edf4" stroke="#8c98ac" stroke-width="0.7"/><path d="M12.6 2.2 L18.2 5 L18.6 10.6 L16.6 7.6 Z" fill="#fff" stroke="#8c98ac" stroke-width="0.6"/><path d="M1.4 7.2 L7 7.2 L8.4 9 L18.6 9 C19.2 9 19.6 9.4 19.6 10 L19.2 20.4 C19.2 21 18.8 21.4 18.2 21.4 L2.8 21.4 C2.2 21.4 1.8 21 1.8 20.4 Z" fill="#3a6fc4" stroke="#1f4690" stroke-width="0.9"/><path d="M2.6 10.4 L18.6 10.4 L18.4 13 L2.7 13 Z" fill="#5c8ad6" opacity="0.8"/><ellipse cx="10.5" cy="22" rx="8.6" ry="0.9" fill="#bdbbb8"/></svg>
<div style="position:absolute;left:1630px;top:1057px;width:290px;height:22px;background:#aaa8a5;border-radius:4px 0 0 4px;"></div>
<div style="position:absolute;left:1667px;top:1057px;width:35px;height:22px;background:#c5d6ef;"></div>
<div style="position:absolute;left:1667px;top:1078px;width:35px;height:1px;background:#6f94cf;"></div>
<div style="position:absolute;left:1666px;top:1058px;width:1px;height:20px;background:#aaa8a5;"></div>
<div style="position:absolute;left:1702px;top:1058px;width:1px;height:20px;background:#aaa8a5;"></div>
<div style="position:absolute;left:1738px;top:1058px;width:1px;height:20px;background:#aaa8a5;"></div>
<div style="position:absolute;left:1774px;top:1058px;width:1px;height:20px;background:#c9c7c4;"></div>
<div style="position:absolute;left:1810px;top:1058px;width:1px;height:20px;background:#c9c7c4;"></div>
<div style="position:absolute;left:1846px;top:1058px;width:1px;height:20px;background:#aaa8a5;"></div>
<div style="position:absolute;left:1882px;top:1058px;width:1px;height:20px;background:#aaa8a5;"></div>
<div style="position:absolute;left:1631px;top:1058px;width:8px;height:8px;box-sizing:border-box;border:1px solid #1a1a1a;background:#f2f1f0;"></div>
<div style="position:absolute;left:1638px;top:1058px;width:28px;height:19px;box-sizing:border-box;border:1px solid #1a1a1a;background:#f2f1f0;"></div>
<svg style="left:1645px;top:1059.6px" width="14.2" height="14.2" viewBox="0 0 20 20"><defs><linearGradient id="fg4" x1="0.3" y1="0" x2="0.6" y2="1"><stop offset="0" stop-color="#5cc6f8"/><stop offset="0.35" stop-color="#1f8fdc"/><stop offset="0.7" stop-color="#0b4aa2"/><stop offset="1" stop-color="#071f5e"/></linearGradient><linearGradient id="fb4" x1="0" y1="0" x2="1" y2="0"><stop offset="0" stop-color="#e55f10"/><stop offset="0.6" stop-color="#ee7a10"/><stop offset="0.8" stop-color="#ffd200"/><stop offset="0.93" stop-color="#ffe000"/><stop offset="1" stop-color="#e8a000"/></linearGradient><linearGradient id="fd4" x1="0" y1="0" x2="0" y2="1"><stop offset="0" stop-color="#d02808" stop-opacity="0"/><stop offset="0.55" stop-color="#d02808" stop-opacity="0"/><stop offset="1" stop-color="#c82408" stop-opacity="0.95"/></linearGradient><linearGradient id="fa4" x1="0" y1="0" x2="1" y2="0"><stop offset="0" stop-color="#e86410"/><stop offset="1" stop-color="#ffc400"/></linearGradient></defs><path d="M1.2 2.4 C1.2 4.4 1.8 5.4 2 6.4 C0.6 8.6 0 10.4 0.2 12 C0.8 16.8 5 20 10 20 C15.4 20 19.8 16 20 10.6 C20.1 7.6 18.6 4.8 16.4 3 C14.6 1.6 12.4 1.4 10.4 1.4 C7.4 1.4 5 2.6 3.6 4.4 C2.6 3.4 1.8 2.8 1.2 2.4 Z" fill="url(#fb4)"/><path d="M1.2 2.4 C1.2 4.4 1.8 5.4 2 6.4 C0.6 8.6 0 10.4 0.2 12 C0.8 16.8 5 20 10 20 C15.4 20 19.8 16 20 10.6 C20.1 7.6 18.6 4.8 16.4 3 C14.6 1.6 12.4 1.4 10.4 1.4 C7.4 1.4 5 2.6 3.6 4.4 C2.6 3.4 1.8 2.8 1.2 2.4 Z" fill="url(#fd4)"/><circle cx="10" cy="7.6" r="7.3" fill="url(#fg4)"/><path d="M14.6 1.9 C17.6 3.6 19.9 7 19.8 10.6 C19.7 12.6 19 14.6 17.8 16 L14.2 15.2 C15.6 13.6 16.2 11.6 15.8 9.6 C15.6 7.4 16 5 14.6 1.9 Z" fill="#ffdc00"/><path d="M17.2 4.4 C18.8 6 19.8 8.4 19.8 10.6 C19.7 12.6 19 14.6 17.8 16 L16.8 15.8 C18.2 13.4 18.6 8.6 17.2 4.4 Z" fill="#f0a800" opacity="0.75"/><path d="M14.2 15.2 L17.8 16 C16.4 17.8 14.4 19.2 12 19.7 L10.4 15.9 C12 16.2 13.2 16 14.2 15.2 Z" fill="#ee7a10"/><path d="M1.8 4 C3 5 4.6 5.2 5.8 4.8 C6.6 4.4 7.2 3.6 8 3.4 C7.6 4.2 7.6 4.8 7.8 5.4 L9.6 6.7 L7.8 7.6 C7.8 8.6 7.2 9.2 6.4 9.6 C5.6 9.8 5.6 10.4 6.6 11.6 L5 15 L0.6 12 Z" fill="#ea6a10"/><path d="M6.6 4.4 C7 3.9 7.4 3.6 8 3.4 C7.6 4.2 7.6 4.8 7.8 5.4 Z" fill="#ffb400"/><path d="M5.4 9.8 C6.4 11.4 8 11.9 9.6 11.6 C10.6 11.4 11.4 11 12.4 11.2 C12 12.2 11 13 9.6 13.6 C7.8 14.2 6 13.9 4.8 13 Z" fill="url(#fa4)"/></svg>
<div style="position:absolute;left:1668px;top:1059px;width:10px;height:5px;background:#7fa2dd;"></div>
<div style="position:absolute;left:1668px;top:1065.3px;width:10px;height:6.2px;background:#7fa2dd;"></div>
<div style="position:absolute;left:1668px;top:1073px;width:10px;height:4.5px;background:#7fa2dd;"></div>
<div style="position:absolute;left:1679px;top:1058px;width:23px;height:19px;background:#d3e1f5;"></div>
<svg style="left:1683px;top:1059.6px" width="14.2" height="14.2" viewBox="0 0 20 20"><defs><linearGradient id="fg5" x1="0.3" y1="0" x2="0.6" y2="1"><stop offset="0" stop-color="#5cc6f8"/><stop offset="0.35" stop-color="#1f8fdc"/><stop offset="0.7" stop-color="#0b4aa2"/><stop offset="1" stop-color="#071f5e"/></linearGradient><linearGradient id="fb5" x1="0" y1="0" x2="1" y2="0"><stop offset="0" stop-color="#e55f10"/><stop offset="0.6" stop-color="#ee7a10"/><stop offset="0.8" stop-color="#ffd200"/><stop offset="0.93" stop-color="#ffe000"/><stop offset="1" stop-color="#e8a000"/></linearGradient><linearGradient id="fd5" x1="0" y1="0" x2="0" y2="1"><stop offset="0" stop-color="#d02808" stop-opacity="0"/><stop offset="0.55" stop-color="#d02808" stop-opacity="0"/><stop offset="1" stop-color="#c82408" stop-opacity="0.95"/></linearGradient><linearGradient id="fa5" x1="0" y1="0" x2="1" y2="0"><stop offset="0" stop-color="#e86410"/><stop offset="1" stop-color="#ffc400"/></linearGradient></defs><path d="M1.2 2.4 C1.2 4.4 1.8 5.4 2 6.4 C0.6 8.6 0 10.4 0.2 12 C0.8 16.8 5 20 10 20 C15.4 20 19.8 16 20 10.6 C20.1 7.6 18.6 4.8 16.4 3 C14.6 1.6 12.4 1.4 10.4 1.4 C7.4 1.4 5 2.6 3.6 4.4 C2.6 3.4 1.8 2.8 1.2 2.4 Z" fill="url(#fb5)"/><path d="M1.2 2.4 C1.2 4.4 1.8 5.4 2 6.4 C0.6 8.6 0 10.4 0.2 12 C0.8 16.8 5 20 10 20 C15.4 20 19.8 16 20 10.6 C20.1 7.6 18.6 4.8 16.4 3 C14.6 1.6 12.4 1.4 10.4 1.4 C7.4 1.4 5 2.6 3.6 4.4 C2.6 3.4 1.8 2.8 1.2 2.4 Z" fill="url(#fd5)"/><circle cx="10" cy="7.6" r="7.3" fill="url(#fg5)"/><path d="M14.6 1.9 C17.6 3.6 19.9 7 19.8 10.6 C19.7 12.6 19 14.6 17.8 16 L14.2 15.2 C15.6 13.6 16.2 11.6 15.8 9.6 C15.6 7.4 16 5 14.6 1.9 Z" fill="#ffdc00"/><path d="M17.2 4.4 C18.8 6 19.8 8.4 19.8 10.6 C19.7 12.6 19 14.6 17.8 16 L16.8 15.8 C18.2 13.4 18.6 8.6 17.2 4.4 Z" fill="#f0a800" opacity="0.75"/><path d="M14.2 15.2 L17.8 16 C16.4 17.8 14.4 19.2 12 19.7 L10.4 15.9 C12 16.2 13.2 16 14.2 15.2 Z" fill="#ee7a10"/><path d="M1.8 4 C3 5 4.6 5.2 5.8 4.8 C6.6 4.4 7.2 3.6 8 3.4 C7.6 4.2 7.6 4.8 7.8 5.4 L9.6 6.7 L7.8 7.6 C7.8 8.6 7.2 9.2 6.4 9.6 C5.6 9.8 5.6 10.4 6.6 11.6 L5 15 L0.6 12 Z" fill="#ea6a10"/><path d="M6.6 4.4 C7 3.9 7.4 3.6 8 3.4 C7.6 4.2 7.6 4.8 7.8 5.4 Z" fill="#ffb400"/><path d="M5.4 9.8 C6.4 11.4 8 11.9 9.6 11.6 C10.6 11.4 11.4 11 12.4 11.2 C12 12.2 11 13 9.6 13.6 C7.8 14.2 6 13.9 4.8 13 Z" fill="url(#fa5)"/></svg>
<div style="position:absolute;left:1703px;top:1058px;width:8px;height:8px;box-sizing:border-box;border:1px solid #1a1a1a;background:#f2f1f0;"></div>
<div style="position:absolute;left:1710px;top:1058px;width:28px;height:19px;box-sizing:border-box;border:1px solid #1a1a1a;background:#f2f1f0;"></div>
<svg style="left:1717px;top:1059.6px" width="14.2" height="14.2" viewBox="0 0 20 20"><defs><linearGradient id="fg6" x1="0.3" y1="0" x2="0.6" y2="1"><stop offset="0" stop-color="#5cc6f8"/><stop offset="0.35" stop-color="#1f8fdc"/><stop offset="0.7" stop-color="#0b4aa2"/><stop offset="1" stop-color="#071f5e"/></linearGradient><linearGradient id="fb6" x1="0" y1="0" x2="1" y2="0"><stop offset="0" stop-color="#e55f10"/><stop offset="0.6" stop-color="#ee7a10"/><stop offset="0.8" stop-color="#ffd200"/><stop offset="0.93" stop-color="#ffe000"/><stop offset="1" stop-color="#e8a000"/></linearGradient><linearGradient id="fd6" x1="0" y1="0" x2="0" y2="1"><stop offset="0" stop-color="#d02808" stop-opacity="0"/><stop offset="0.55" stop-color="#d02808" stop-opacity="0"/><stop offset="1" stop-color="#c82408" stop-opacity="0.95"/></linearGradient><linearGradient id="fa6" x1="0" y1="0" x2="1" y2="0"><stop offset="0" stop-color="#e86410"/><stop offset="1" stop-color="#ffc400"/></linearGradient></defs><path d="M1.2 2.4 C1.2 4.4 1.8 5.4 2 6.4 C0.6 8.6 0 10.4 0.2 12 C0.8 16.8 5 20 10 20 C15.4 20 19.8 16 20 10.6 C20.1 7.6 18.6 4.8 16.4 3 C14.6 1.6 12.4 1.4 10.4 1.4 C7.4 1.4 5 2.6 3.6 4.4 C2.6 3.4 1.8 2.8 1.2 2.4 Z" fill="url(#fb6)"/><path d="M1.2 2.4 C1.2 4.4 1.8 5.4 2 6.4 C0.6 8.6 0 10.4 0.2 12 C0.8 16.8 5 20 10 20 C15.4 20 19.8 16 20 10.6 C20.1 7.6 18.6 4.8 16.4 3 C14.6 1.6 12.4 1.4 10.4 1.4 C7.4 1.4 5 2.6 3.6 4.4 C2.6 3.4 1.8 2.8 1.2 2.4 Z" fill="url(#fd6)"/><circle cx="10" cy="7.6" r="7.3" fill="url(#fg6)"/><path d="M14.6 1.9 C17.6 3.6 19.9 7 19.8 10.6 C19.7 12.6 19 14.6 17.8 16 L14.2 15.2 C15.6 13.6 16.2 11.6 15.8 9.6 C15.6 7.4 16 5 14.6 1.9 Z" fill="#ffdc00"/><path d="M17.2 4.4 C18.8 6 19.8 8.4 19.8 10.6 C19.7 12.6 19 14.6 17.8 16 L16.8 15.8 C18.2 13.4 18.6 8.6 17.2 4.4 Z" fill="#f0a800" opacity="0.75"/><path d="M14.2 15.2 L17.8 16 C16.4 17.8 14.4 19.2 12 19.7 L10.4 15.9 C12 16.2 13.2 16 14.2 15.2 Z" fill="#ee7a10"/><path d="M1.8 4 C3 5 4.6 5.2 5.8 4.8 C6.6 4.4 7.2 3.6 8 3.4 C7.6 4.2 7.6 4.8 7.8 5.4 L9.6 6.7 L7.8 7.6 C7.8 8.6 7.2 9.2 6.4 9.6 C5.6 9.8 5.6 10.4 6.6 11.6 L5 15 L0.6 12 Z" fill="#ea6a10"/><path d="M6.6 4.4 C7 3.9 7.4 3.6 8 3.4 C7.6 4.2 7.6 4.8 7.8 5.4 Z" fill="#ffb400"/><path d="M5.4 9.8 C6.4 11.4 8 11.9 9.6 11.6 C10.6 11.4 11.4 11 12.4 11.2 C12 12.2 11 13 9.6 13.6 C7.8 14.2 6 13.9 4.8 13 Z" fill="url(#fa6)"/></svg>
<div style="position:absolute;left:1745px;top:1059px;width:9px;height:6px;box-sizing:border-box;border:1px solid #1a1a1a;background:#e8e7e6;"></div>
<div style="position:absolute;left:1754px;top:1059px;width:9px;height:6px;box-sizing:border-box;border:1px solid #1a1a1a;background:#e8e7e6;"></div>
<div style="position:absolute;left:1744px;top:1066px;width:27px;height:9px;box-sizing:border-box;border:1px solid #1a1a1a;background:#f2f1f0;"></div>
<div style="position:absolute;left:1784px;top:1067px;width:20px;height:9px;box-sizing:border-box;border:1px solid #1a1a1a;background:#f2f1f0;"></div>
<div style="position:absolute;left:1816px;top:1058px;width:16px;height:19px;box-sizing:border-box;border:1px solid #1a1a1a;background:#f2f1f0;"></div>
<div style="position:absolute;left:1816px;top:1058px;width:2px;height:9px;background:#1a1a1a;"></div>
<div style="position:absolute;left:1833px;top:1061px;width:8px;height:5px;box-sizing:border-box;border:1px solid #1a1a1a;background:#f2f1f0;"></div>
<div style="position:absolute;left:1847px;top:1058px;width:4px;height:6px;box-sizing:border-box;border:1px solid #1a1a1a;background:#f2f1f0;"></div>
<div style="position:absolute;left:1852px;top:1058px;width:15px;height:3px;box-sizing:border-box;border:1px solid #1a1a1a;background:#e8e7e6;"></div>
<div style="position:absolute;left:1872px;top:1058px;width:9px;height:12px;box-sizing:border-box;border:1px solid #1a1a1a;background:#f2f1f0;"></div>
<div style="position:absolute;left:1852px;top:1063px;width:14px;height:8px;box-sizing:border-box;border:1px solid #1a1a1a;background:#e8e7e6;"></div>
<div style="position:absolute;left:1847px;top:1070px;width:20px;height:8px;box-sizing:border-box;border:1px solid #1a1a1a;background:#f2f1f0;"></div>
<div style="position:absolute;left:1863px;top:1063px;width:13px;height:11px;box-sizing:border-box;border:1px solid #1a1a1a;background:#f2f1f0;"></div>
<div style="position:absolute;left:1883px;top:1058px;width:8px;height:8px;box-sizing:border-box;border:1px solid #1a1a1a;background:#e8e7e6;"></div>
<div style="position:absolute;left:1883px;top:1068px;width:9px;height:10px;box-sizing:border-box;border:1px solid #1a1a1a;background:#f2f1f0;"></div>
<div style="position:absolute;left:1891px;top:1058px;width:27px;height:19px;box-sizing:border-box;border:1px solid #1a1a1a;background:#f2f1f0;"></div>
<svg style="left:1897px;top:1059.6px" width="14.2" height="14.2" viewBox="0 0 20 20"><defs><linearGradient id="fg7" x1="0.3" y1="0" x2="0.6" y2="1"><stop offset="0" stop-color="#5cc6f8"/><stop offset="0.35" stop-color="#1f8fdc"/><stop offset="0.7" stop-color="#0b4aa2"/><stop offset="1" stop-color="#071f5e"/></linearGradient><linearGradient id="fb7" x1="0" y1="0" x2="1" y2="0"><stop offset="0" stop-color="#e55f10"/><stop offset="0.6" stop-color="#ee7a10"/><stop offset="0.8" stop-color="#ffd200"/><stop offset="0.93" stop-color="#ffe000"/><stop offset="1" stop-color="#e8a000"/></linearGradient><linearGradient id="fd7" x1="0" y1="0" x2="0" y2="1"><stop offset="0" stop-color="#d02808" stop-opacity="0"/><stop offset="0.55" stop-color="#d02808" stop-opacity="0"/><stop offset="1" stop-color="#c82408" stop-opacity="0.95"/></linearGradient><linearGradient id="fa7" x1="0" y1="0" x2="1" y2="0"><stop offset="0" stop-color="#e86410"/><stop offset="1" stop-color="#ffc400"/></linearGradient></defs><path d="M1.2 2.4 C1.2 4.4 1.8 5.4 2 6.4 C0.6 8.6 0 10.4 0.2 12 C0.8 16.8 5 20 10 20 C15.4 20 19.8 16 20 10.6 C20.1 7.6 18.6 4.8 16.4 3 C14.6 1.6 12.4 1.4 10.4 1.4 C7.4 1.4 5 2.6 3.6 4.4 C2.6 3.4 1.8 2.8 1.2 2.4 Z" fill="url(#fb7)"/><path d="M1.2 2.4 C1.2 4.4 1.8 5.4 2 6.4 C0.6 8.6 0 10.4 0.2 12 C0.8 16.8 5 20 10 20 C15.4 20 19.8 16 20 10.6 C20.1 7.6 18.6 4.8 16.4 3 C14.6 1.6 12.4 1.4 10.4 1.4 C7.4 1.4 5 2.6 3.6 4.4 C2.6 3.4 1.8 2.8 1.2 2.4 Z" fill="url(#fd7)"/><circle cx="10" cy="7.6" r="7.3" fill="url(#fg7)"/><path d="M14.6 1.9 C17.6 3.6 19.9 7 19.8 10.6 C19.7 12.6 19 14.6 17.8 16 L14.2 15.2 C15.6 13.6 16.2 11.6 15.8 9.6 C15.6 7.4 16 5 14.6 1.9 Z" fill="#ffdc00"/><path d="M17.2 4.4 C18.8 6 19.8 8.4 19.8 10.6 C19.7 12.6 19 14.6 17.8 16 L16.8 15.8 C18.2 13.4 18.6 8.6 17.2 4.4 Z" fill="#f0a800" opacity="0.75"/><path d="M14.2 15.2 L17.8 16 C16.4 17.8 14.4 19.2 12 19.7 L10.4 15.9 C12 16.2 13.2 16 14.2 15.2 Z" fill="#ee7a10"/><path d="M1.8 4 C3 5 4.6 5.2 5.8 4.8 C6.6 4.4 7.2 3.6 8 3.4 C7.6 4.2 7.6 4.8 7.8 5.4 L9.6 6.7 L7.8 7.6 C7.8 8.6 7.2 9.2 6.4 9.6 C5.6 9.8 5.6 10.4 6.6 11.6 L5 15 L0.6 12 Z" fill="#ea6a10"/><path d="M6.6 4.4 C7 3.9 7.4 3.6 8 3.4 C7.6 4.2 7.6 4.8 7.8 5.4 Z" fill="#ffb400"/><path d="M5.4 9.8 C6.4 11.4 8 11.9 9.6 11.6 C10.6 11.4 11.4 11 12.4 11.2 C12 12.2 11 13 9.6 13.6 C7.8 14.2 6 13.9 4.8 13 Z" fill="url(#fa7)"/></svg>
</div>
</body></html>
